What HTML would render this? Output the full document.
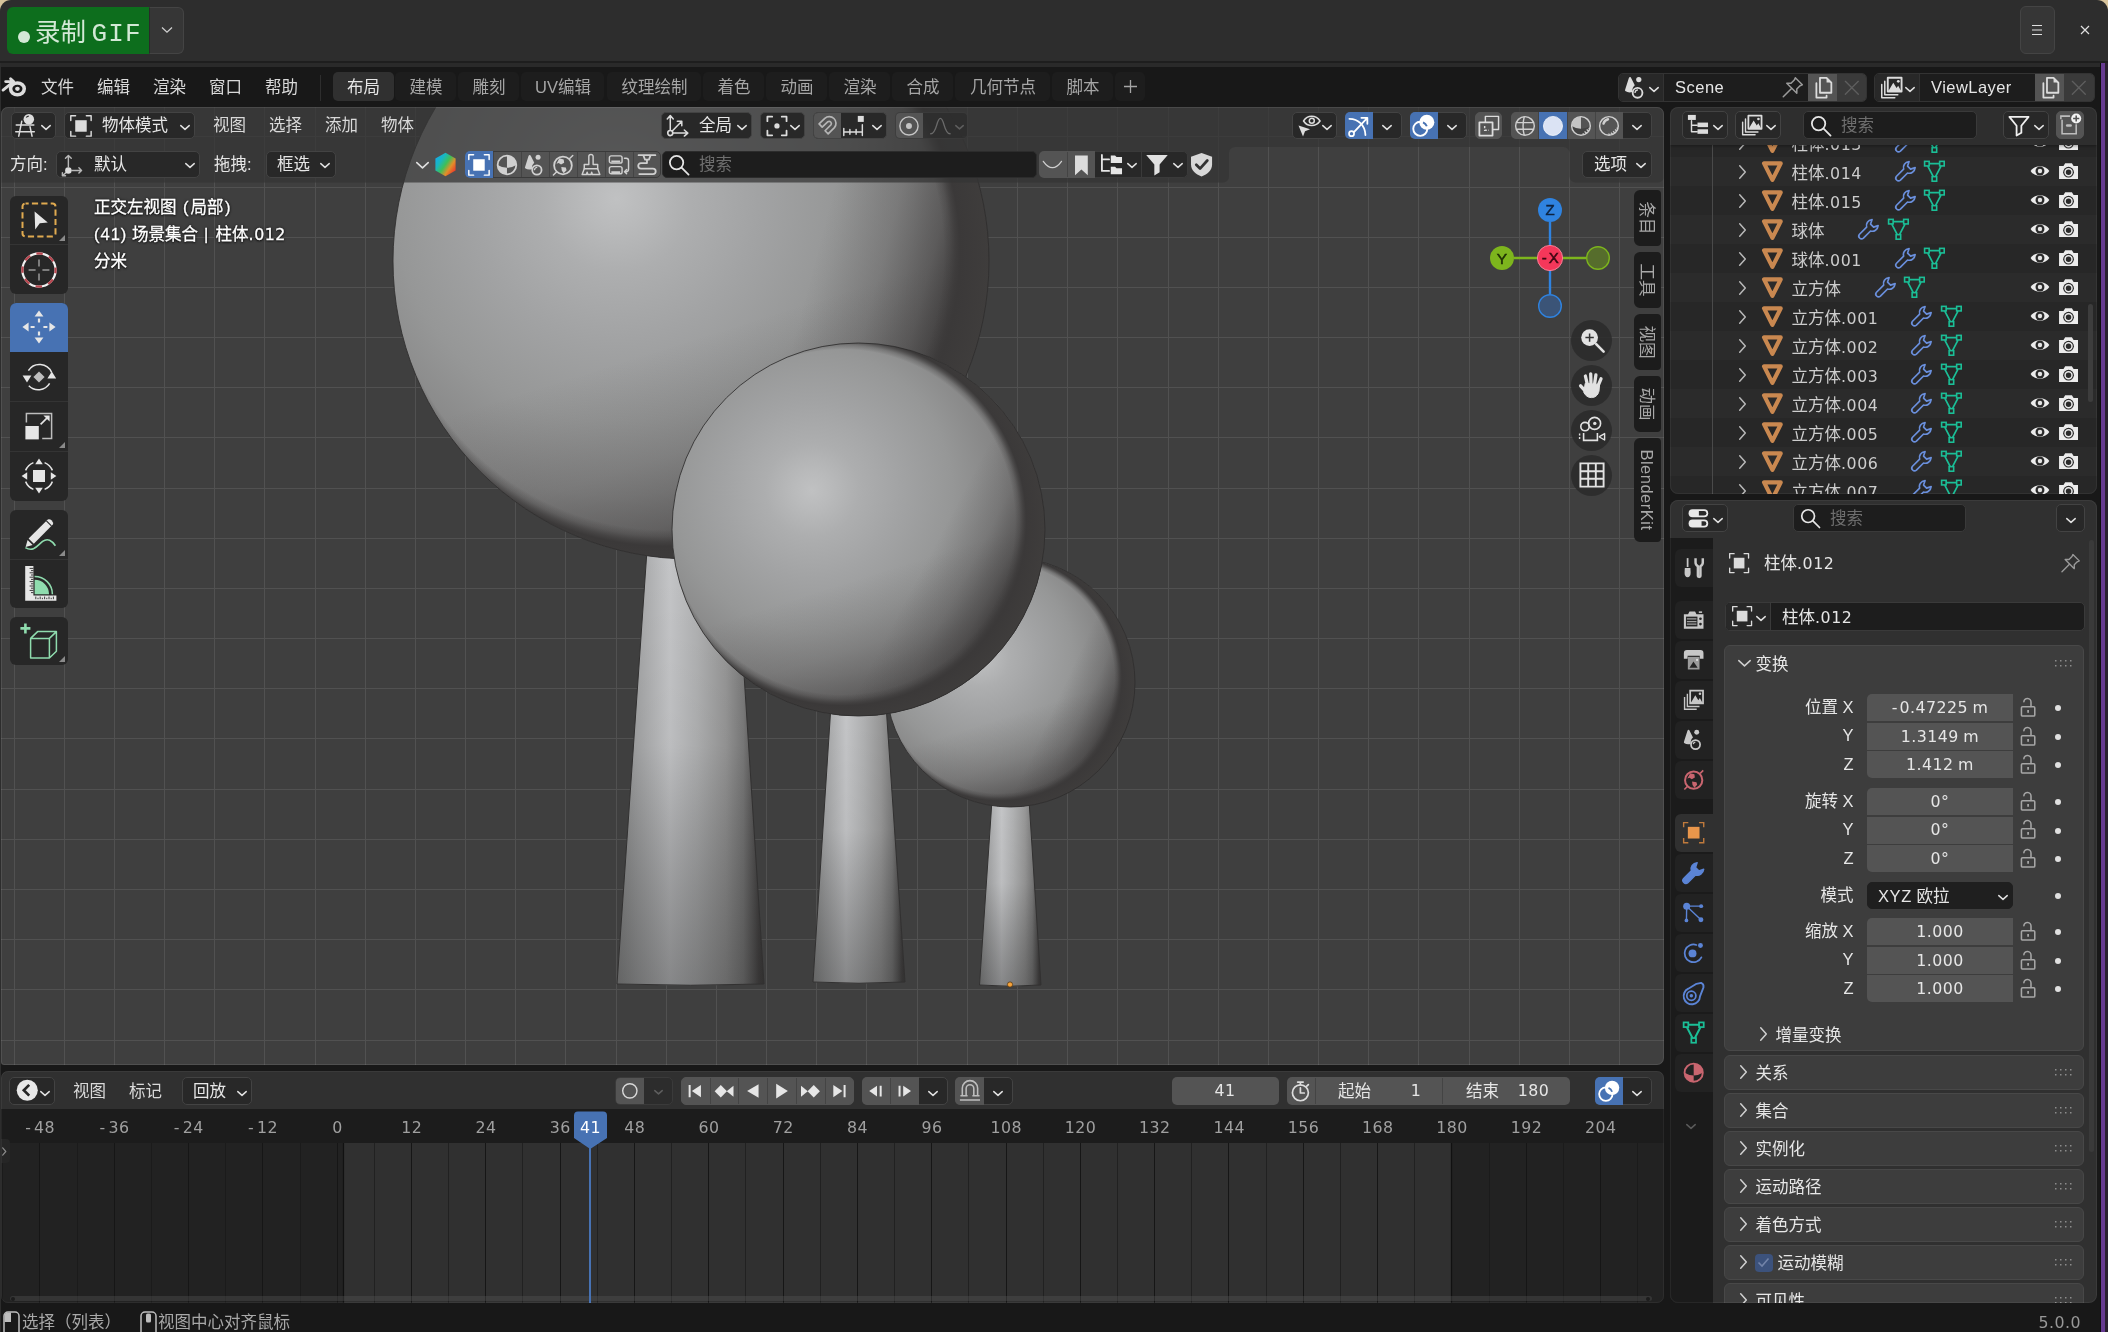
<!DOCTYPE html>
<html lang="zh-CN"><head><meta charset="utf-8"><title>Blender</title>
<style>
html,body{margin:0;padding:0}
body{width:2108px;height:1332px;overflow:hidden;position:relative;background:#2d2d2d;
 font-family:"Liberation Sans","Noto Sans CJK SC",sans-serif;font-size:16.5px;color:#d9d9d9;line-height:24px;
 -webkit-font-smoothing:antialiased}
.a{position:absolute}
.t{position:absolute;white-space:nowrap;line-height:24px;height:24px}
.w{color:#e6e6e6}
.dim{color:#989898}
.n{font-family:'DejaVu Sans',sans-serif;font-size:15.8px;letter-spacing:.55px}
.d{font-family:'DejaVu Sans',sans-serif;font-size:15.8px;letter-spacing:.45px}
.btn{position:absolute;box-sizing:border-box;border-radius:5px;background:#282828;border:1px solid #434343}
.lt{background:#545454;border-color:#545454}
.bl{background:#4772b3;border-color:#4772b3}
svg{position:absolute;overflow:visible}
.ic{fill:none;stroke:#dcdcdc;stroke-width:1.6;stroke-linecap:round;stroke-linejoin:round}
</style></head><body><div id="root" style="position:absolute;left:0;top:0;width:2108px;height:1332px;will-change:transform">

<!-- desktop corners -->
<div class="a" style="left:0;top:0;width:14px;height:14px;background:#d8c49c"></div>
<div class="a" style="left:2094px;top:0;width:14px;height:14px;background:#d8c49c"></div>
<div class="a" style="left:0;top:0;width:2108px;height:62px;background:#2d2d2d;border-radius:11px 11px 0 0"></div>
<div class="a" style="left:0;top:61px;width:2108px;height:2px;background:#1e1e1e"></div>
<div class="a" style="left:1px;top:63px;width:2107px;height:4px;background:#2a2a2a"></div>
<!-- blender window base -->
<div class="a" style="left:1px;top:67px;width:2100px;height:1265px;background:#181818"></div>
<!-- right purple edge -->
<div class="a" style="left:2100px;top:63px;width:1px;height:1269px;background:#0c0c0c"></div>
<div class="a" style="left:2101px;top:63px;width:4px;height:1269px;background:#663a90"></div>
<div class="a" style="left:2105px;top:63px;width:3px;height:1269px;background:#2a2030"></div>

<!-- record button -->
<div class="a" style="left:7px;top:7px;width:143px;height:47px;background:#0d6e1d;border-radius:6px 0 0 6px"></div>
<div class="a" style="left:149px;top:7px;width:35px;height:47px;box-sizing:border-box;background:#363636;border:1px solid #444;border-left:1px solid #2a2a2a;border-radius:0 6px 6px 0"></div>
<div class="a" style="left:18px;top:31px;width:12px;height:12px;border-radius:50%;background:#d3e9d6"></div>
<div class="t" style="left:35px;top:15px;font-size:25.5px;line-height:34px;height:34px;color:#d3e9d6">录制 <span style="font-family:'Liberation Mono',monospace;font-size:26px;letter-spacing:1.1px;margin-left:-1.5px">GIF</span></div>
<svg style="left:160px;top:25px" width="14" height="10" viewBox="0 0 14 10"><path d="M2 2.5 L7 7.2 L12 2.5" fill="none" stroke="#cfcfcf" stroke-width="1.3"/></svg>
<!-- menu / close -->
<div class="a" style="left:2020px;top:6px;width:35px;height:48px;box-sizing:border-box;background:#363636;border:1px solid #444;border-radius:6px"></div>
<svg style="left:2031px;top:24px" width="12" height="12" viewBox="0 0 12 12"><path d="M1 1.5H11M1 6H11M1 10.5H11" stroke="#e0e0e0" stroke-width="1.1"/></svg>
<svg style="left:2080px;top:25px" width="10" height="10" viewBox="0 0 10 10"><path d="M1 1L9 9M9 1L1 9" stroke="#e0e0e0" stroke-width="1.2"/></svg>


<!-- 3D viewport area -->
<div class="a" id="vp" style="left:1px;top:107px;width:1663px;height:958px;background:#3f3f3f;border-radius:7px 7px 7px 3px;overflow:hidden"></div>
<!-- timeline area -->
<div class="a" id="tl" style="left:1px;top:1071px;width:1663px;height:232px;background:#222222;border-radius:7px;overflow:hidden"></div>
<!-- outliner area -->
<div class="a" id="ol" style="left:1670px;top:107px;width:427px;height:387px;background:#282828;border-radius:8px;overflow:hidden"></div>
<!-- properties area -->
<div class="a" id="pr" style="left:1670px;top:500px;width:427px;height:803px;background:#303030;border-radius:8px;overflow:hidden"></div>

<svg class="a" style="left:0;top:0" width="1670" height="1070" viewBox="0 0 1670 1070">
<defs>
<radialGradient id="s1a" gradientUnits="userSpaceOnUse" cx="616.5" cy="198.4" r="372.5">
<stop offset="0" stop-color="#c0c1c2"/><stop offset=".08" stop-color="#b9babb"/><stop offset=".2" stop-color="#adaeaf"/><stop offset=".38" stop-color="#a2a3a4"/>
<stop offset=".6" stop-color="#969797"/><stop offset=".8" stop-color="#868686"/><stop offset=".93" stop-color="#747373"/><stop offset="1" stop-color="#646363"/></radialGradient>
<radialGradient id="s1b" gradientUnits="userSpaceOnUse" cx="666.6" cy="252.7" r="331.4">
<stop offset="0" stop-color="#3b3939" stop-opacity="0"/><stop offset="0.8363" stop-color="#3b3939" stop-opacity="0"/>
<stop offset="0.8561" stop-color="#3b3939" stop-opacity=".3"/><stop offset="0.8719" stop-color="#3b3939" stop-opacity=".72"/><stop offset="0.8858" stop-color="#3b3939" stop-opacity="1"/><stop offset="1" stop-color="#403e3d" stop-opacity="1"/></radialGradient>
<linearGradient id="s1c" gradientUnits="userSpaceOnUse" x1="403.2" y1="183.9" x2="978.8" y2="338.1">
<stop offset="0" stop-color="#3b3939" stop-opacity="0"/><stop offset="0.7000" stop-color="#3b3939" stop-opacity="0"/><stop offset="0.8100" stop-color="#3b3939" stop-opacity=".2"/>
<stop offset="0.8900" stop-color="#3b3939" stop-opacity=".5"/><stop offset="0.9400" stop-color="#3b3939" stop-opacity=".85"/><stop offset="0.9700" stop-color="#3b3939" stop-opacity="1"/><stop offset="1" stop-color="#3b3939" stop-opacity="1"/></linearGradient>
<linearGradient id="s1d" gradientUnits="userSpaceOnUse" x1="601.6" y1="-23.3" x2="780.4" y2="545.3">
<stop offset="0" stop-color="#3b3939" stop-opacity="0"/><stop offset="0.6250" stop-color="#3b3939" stop-opacity="0"/><stop offset="0.8000" stop-color="#3b3939" stop-opacity=".17"/>
<stop offset="0.9100" stop-color="#3b3939" stop-opacity=".36"/><stop offset="0.9750" stop-color="#3b3939" stop-opacity=".6"/><stop offset="1" stop-color="#3b3939" stop-opacity=".75"/></linearGradient>

<radialGradient id="s2a" gradientUnits="userSpaceOnUse" cx="811.9" cy="490.3" r="233.1">
<stop offset="0" stop-color="#c0c1c2"/><stop offset=".08" stop-color="#b9babb"/><stop offset=".2" stop-color="#adaeaf"/><stop offset=".38" stop-color="#a2a3a4"/>
<stop offset=".6" stop-color="#969797"/><stop offset=".8" stop-color="#868686"/><stop offset=".93" stop-color="#747373"/><stop offset="1" stop-color="#646363"/></radialGradient>
<radialGradient id="s2b" gradientUnits="userSpaceOnUse" cx="842.6" cy="522.0" r="207.9">
<stop offset="0" stop-color="#3b3939" stop-opacity="0"/><stop offset="0.8296" stop-color="#3b3939" stop-opacity="0"/>
<stop offset="0.8511" stop-color="#3b3939" stop-opacity=".3"/><stop offset="0.8683" stop-color="#3b3939" stop-opacity=".72"/><stop offset="0.8834" stop-color="#3b3939" stop-opacity="1"/><stop offset="1" stop-color="#403e3d" stop-opacity="1"/></radialGradient>
<linearGradient id="s2c" gradientUnits="userSpaceOnUse" x1="693.8" y1="441.9" x2="1023.2" y2="617.1">
<stop offset="0" stop-color="#3b3939" stop-opacity="0"/><stop offset="0.7000" stop-color="#3b3939" stop-opacity="0"/><stop offset="0.8100" stop-color="#3b3939" stop-opacity=".2"/>
<stop offset="0.8900" stop-color="#3b3939" stop-opacity=".5"/><stop offset="0.9400" stop-color="#3b3939" stop-opacity=".85"/><stop offset="0.9700" stop-color="#3b3939" stop-opacity="1"/><stop offset="1" stop-color="#3b3939" stop-opacity="1"/></linearGradient>
<linearGradient id="s2d" gradientUnits="userSpaceOnUse" x1="802.5" y1="351.6" x2="914.5" y2="707.4">
<stop offset="0" stop-color="#3b3939" stop-opacity="0"/><stop offset="0.6250" stop-color="#3b3939" stop-opacity="0"/><stop offset="0.8000" stop-color="#3b3939" stop-opacity=".17"/>
<stop offset="0.9100" stop-color="#3b3939" stop-opacity=".36"/><stop offset="0.9750" stop-color="#3b3939" stop-opacity=".6"/><stop offset="1" stop-color="#3b3939" stop-opacity=".75"/></linearGradient>

<radialGradient id="s3a" gradientUnits="userSpaceOnUse" cx="979.4" cy="656.4" r="155.6">
<stop offset="0" stop-color="#c0c1c2"/><stop offset=".08" stop-color="#b9babb"/><stop offset=".2" stop-color="#adaeaf"/><stop offset=".38" stop-color="#a2a3a4"/>
<stop offset=".6" stop-color="#969797"/><stop offset=".8" stop-color="#868686"/><stop offset=".93" stop-color="#747373"/><stop offset="1" stop-color="#646363"/></radialGradient>
<radialGradient id="s3b" gradientUnits="userSpaceOnUse" cx="999.3" cy="678.1" r="139.4">
<stop offset="0" stop-color="#3b3939" stop-opacity="0"/><stop offset="0.8259" stop-color="#3b3939" stop-opacity="0"/>
<stop offset="0.8473" stop-color="#3b3939" stop-opacity=".3"/><stop offset="0.8645" stop-color="#3b3939" stop-opacity=".72"/><stop offset="0.8795" stop-color="#3b3939" stop-opacity="1"/><stop offset="1" stop-color="#403e3d" stop-opacity="1"/></radialGradient>
<linearGradient id="s3c" gradientUnits="userSpaceOnUse" x1="897.7" y1="629.9" x2="1123.3" y2="735.1">
<stop offset="0" stop-color="#3b3939" stop-opacity="0"/><stop offset="0.7000" stop-color="#3b3939" stop-opacity="0"/><stop offset="0.8100" stop-color="#3b3939" stop-opacity=".2"/>
<stop offset="0.8900" stop-color="#3b3939" stop-opacity=".5"/><stop offset="0.9400" stop-color="#3b3939" stop-opacity=".85"/><stop offset="0.9700" stop-color="#3b3939" stop-opacity="1"/><stop offset="1" stop-color="#3b3939" stop-opacity="1"/></linearGradient>
<linearGradient id="s3d" gradientUnits="userSpaceOnUse" x1="973.1" y1="563.7" x2="1047.8" y2="801.3">
<stop offset="0" stop-color="#3b3939" stop-opacity="0"/><stop offset="0.6250" stop-color="#3b3939" stop-opacity="0"/><stop offset="0.8000" stop-color="#3b3939" stop-opacity=".17"/>
<stop offset="0.9100" stop-color="#3b3939" stop-opacity=".36"/><stop offset="0.9750" stop-color="#3b3939" stop-opacity=".6"/><stop offset="1" stop-color="#3b3939" stop-opacity=".75"/></linearGradient>
<linearGradient id="c1h" gradientUnits="userSpaceOnUse" x1="617" y1="0" x2="764" y2="0">
<stop offset="0" stop-color="#8d8e8e"/><stop offset=".14" stop-color="#a4a5a6"/><stop offset=".36" stop-color="#c4c5c7"/><stop offset=".55" stop-color="#b0b1b2"/>
<stop offset=".74" stop-color="#979797"/><stop offset=".86" stop-color="#7b7b7b"/><stop offset=".925" stop-color="#5c5b5b"/><stop offset=".965" stop-color="#474545"/><stop offset="1" stop-color="#403e3d"/></linearGradient>
<linearGradient id="c1v" gradientUnits="userSpaceOnUse" x1="0" y1="550" x2="0" y2="984">
<stop offset="0" stop-color="#000" stop-opacity="0"/><stop offset=".45" stop-color="#000" stop-opacity=".04"/><stop offset="1" stop-color="#1a1a1a" stop-opacity=".36"/></linearGradient><linearGradient id="c2h" gradientUnits="userSpaceOnUse" x1="813" y1="0" x2="905" y2="0">
<stop offset="0" stop-color="#8d8e8e"/><stop offset=".14" stop-color="#a4a5a6"/><stop offset=".36" stop-color="#c4c5c7"/><stop offset=".55" stop-color="#b0b1b2"/>
<stop offset=".74" stop-color="#979797"/><stop offset=".86" stop-color="#7b7b7b"/><stop offset=".925" stop-color="#5c5b5b"/><stop offset=".965" stop-color="#474545"/><stop offset="1" stop-color="#403e3d"/></linearGradient>
<linearGradient id="c2v" gradientUnits="userSpaceOnUse" x1="0" y1="705" x2="0" y2="982">
<stop offset="0" stop-color="#000" stop-opacity="0"/><stop offset=".45" stop-color="#000" stop-opacity=".04"/><stop offset="1" stop-color="#1a1a1a" stop-opacity=".36"/></linearGradient><linearGradient id="c3h" gradientUnits="userSpaceOnUse" x1="979.5" y1="0" x2="1041" y2="0">
<stop offset="0" stop-color="#8d8e8e"/><stop offset=".14" stop-color="#a4a5a6"/><stop offset=".36" stop-color="#c4c5c7"/><stop offset=".55" stop-color="#b0b1b2"/>
<stop offset=".74" stop-color="#979797"/><stop offset=".86" stop-color="#7b7b7b"/><stop offset=".925" stop-color="#5c5b5b"/><stop offset=".965" stop-color="#474545"/><stop offset="1" stop-color="#403e3d"/></linearGradient>
<linearGradient id="c3v" gradientUnits="userSpaceOnUse" x1="0" y1="800" x2="0" y2="985">
<stop offset="0" stop-color="#000" stop-opacity="0"/><stop offset=".45" stop-color="#000" stop-opacity=".04"/><stop offset="1" stop-color="#1a1a1a" stop-opacity=".36"/></linearGradient><clipPath id="vpc"><rect x="1" y="107" width="1663" height="958" rx="7"/></clipPath></defs>
<g clip-path="url(#vpc)">
<path d="M14.5 107V1066M64.5 107V1066M114.5 107V1066M164.5 107V1066M214.5 107V1066M264.5 107V1066M315.5 107V1066M365.5 107V1066M415.5 107V1066M465.5 107V1066M515.5 107V1066M565.5 107V1066M616.5 107V1066M666.5 107V1066M716.5 107V1066M766.5 107V1066M816.5 107V1066M866.5 107V1066M917.5 107V1066M967.5 107V1066M1017.5 107V1066M1067.5 107V1066M1117.5 107V1066M1168.5 107V1066M1218.5 107V1066M1268.5 107V1066M1318.5 107V1066M1368.5 107V1066M1418.5 107V1066M1469.5 107V1066M1519.5 107V1066M1569.5 107V1066M1619.5 107V1066M1669.5 107V1066M0 136.5H1666M0 187.5H1666M0 237.5H1666M0 287.5H1666M0 337.5H1666M0 387.5H1666M0 437.5H1666M0 488.5H1666M0 538.5H1666M0 588.5H1666M0 638.5H1666M0 688.5H1666M0 738.5H1666M0 789.5H1666M0 839.5H1666M0 889.5H1666M0 939.5H1666M0 989.5H1666M0 1040.5H1666" stroke="#515151" stroke-width="1" fill="none"/>
<path d="M647 550L736 550L764 984Q690.5 986.5 617 984Z" fill="url(#c1h)"/><path d="M647 550L736 550L764 984Q690.5 986.5 617 984Z" fill="url(#c1v)" stroke="#323131" stroke-width="1"/>
<circle cx="691" cy="261" r="298" fill="url(#s1a)"/><circle cx="691" cy="261" r="298" fill="url(#s1d)"/><circle cx="691" cy="261" r="298" fill="url(#s1c)"/><circle cx="691" cy="261" r="298" fill="url(#s1b)" stroke="#2e2d2d" stroke-opacity=".85" stroke-width="1"/>
<path d="M992 800L1029 800L1041 985Q1010.25 987.5 979.5 985Z" fill="url(#c3h)"/><path d="M992 800L1029 800L1041 985Q1010.25 987.5 979.5 985Z" fill="url(#c3v)" stroke="#323131" stroke-width="1"/>
<circle cx="1010.5" cy="682.5" r="124.5" fill="url(#s3a)"/><circle cx="1010.5" cy="682.5" r="124.5" fill="url(#s3d)"/><circle cx="1010.5" cy="682.5" r="124.5" fill="url(#s3c)"/><circle cx="1010.5" cy="682.5" r="124.5" fill="url(#s3b)" stroke="#2e2d2d" stroke-opacity=".85" stroke-width="1"/>
<path d="M831 705L886 705L905 982Q859.0 984.5 813 982Z" fill="url(#c2h)"/><path d="M831 705L886 705L905 982Q859.0 984.5 813 982Z" fill="url(#c2v)" stroke="#323131" stroke-width="1"/>
<circle cx="858.5" cy="529.5" r="186.5" fill="url(#s2a)"/><circle cx="858.5" cy="529.5" r="186.5" fill="url(#s2d)"/><circle cx="858.5" cy="529.5" r="186.5" fill="url(#s2c)"/><circle cx="858.5" cy="529.5" r="186.5" fill="url(#s2b)" stroke="#2e2d2d" stroke-opacity=".85" stroke-width="1"/>
<circle cx="1010" cy="984.5" r="2.6" fill="#f5a23a" stroke="#5a3a10" stroke-width=".8"/>
</g></svg>

<svg class="a" style="left:0;top:0" width="1670" height="190" viewBox="0 0 1670 190">
<path d="M1 114 a7 7 0 0 1 7 -7 H1657 a7 7 0 0 1 7 7 V176.5 a6 6 0 0 1 -6 6 H1575.5 a6 6 0 0 1 -6 -6 V153 a6 6 0 0 0 -6 -6 H1235 a6 6 0 0 0 -6 6 V176.5 a6 6 0 0 1 -6 6 H1 Z" fill="rgb(52,52,52)" fill-opacity=".74"/>
</svg>
<svg style="left:1.3200000000000003px;top:73.32px;" width="27.36" height="27.36" viewBox="0 0 20 20"><path d="M1.5 12.5L9.2 6.3H3.4M9.2 6.3L7 4.2" fill="none" stroke="#dcdcdc" stroke-width="2.1" stroke-linecap="round" stroke-linejoin="round"/><ellipse cx="12" cy="11.6" rx="5" ry="4.3" fill="none" stroke="#dcdcdc" stroke-width="2.6"/><ellipse cx="12" cy="11.6" rx="1.7" ry="1.5" fill="#dcdcdc"/></svg>
<div class="t " style="left:41px;top:75px;">文件</div>
<div class="t " style="left:97px;top:75px;">编辑</div>
<div class="t " style="left:153px;top:75px;">渲染</div>
<div class="t " style="left:209px;top:75px;">窗口</div>
<div class="t " style="left:265px;top:75px;">帮助</div>
<div class="a" style="left:320px;top:75px;width:1px;height:26px;background:#2e2e2e;"></div>
<div class="a" style="left:333px;top:72px;width:61px;height:29px;background:#303030;border-radius:5px"></div>
<div class="t w" style="left:333.0px;width:61px;text-align:center;top:75px;">布局</div>
<div class="a" style="left:395px;top:72px;width:61px;height:29px;background:#1d1d1d;border-radius:5px"></div>
<div class="t " style="left:395.0px;width:62px;text-align:center;top:75px;color:#a6a6a6">建模</div>
<div class="a" style="left:458px;top:72px;width:61px;height:29px;background:#1d1d1d;border-radius:5px"></div>
<div class="t " style="left:458.0px;width:62px;text-align:center;top:75px;color:#a6a6a6">雕刻</div>
<div class="a" style="left:521px;top:72px;width:83px;height:29px;background:#1d1d1d;border-radius:5px"></div>
<div class="t " style="left:521.0px;width:84px;text-align:center;top:75px;color:#a6a6a6">UV编辑</div>
<div class="a" style="left:607px;top:72px;width:94px;height:29px;background:#1d1d1d;border-radius:5px"></div>
<div class="t " style="left:607.0px;width:95px;text-align:center;top:75px;color:#a6a6a6">纹理绘制</div>
<div class="a" style="left:703px;top:72px;width:61px;height:29px;background:#1d1d1d;border-radius:5px"></div>
<div class="t " style="left:703.0px;width:62px;text-align:center;top:75px;color:#a6a6a6">着色</div>
<div class="a" style="left:766px;top:72px;width:61px;height:29px;background:#1d1d1d;border-radius:5px"></div>
<div class="t " style="left:766.0px;width:62px;text-align:center;top:75px;color:#a6a6a6">动画</div>
<div class="a" style="left:829px;top:72px;width:61px;height:29px;background:#1d1d1d;border-radius:5px"></div>
<div class="t " style="left:829.0px;width:62px;text-align:center;top:75px;color:#a6a6a6">渲染</div>
<div class="a" style="left:892px;top:72px;width:61px;height:29px;background:#1d1d1d;border-radius:5px"></div>
<div class="t " style="left:892.0px;width:62px;text-align:center;top:75px;color:#a6a6a6">合成</div>
<div class="a" style="left:955px;top:72px;width:95px;height:29px;background:#1d1d1d;border-radius:5px"></div>
<div class="t " style="left:955.0px;width:96px;text-align:center;top:75px;color:#a6a6a6">几何节点</div>
<div class="a" style="left:1052px;top:72px;width:61px;height:29px;background:#1d1d1d;border-radius:5px"></div>
<div class="t " style="left:1052.0px;width:62px;text-align:center;top:75px;color:#a6a6a6">脚本</div>
<div class="a" style="left:1115px;top:72px;width:30px;height:29px;background:#1d1d1d;border-radius:5px"></div>
<svg style="left:1123px;top:79px" width="15" height="15" viewBox="0 0 15 15"><path d="M7.5 1V14M1 7.5H14" stroke="#a6a6a6" stroke-width="1.3"/></svg>
<div class="btn " style="left:1618px;top:73px;width:249px;height:29px;background:#1d1d1d;border-color:#333"></div>
<div class="a" style="left:1619px;top:74px;width:44px;height:27px;background:#282828;border-radius:4px 0 0 4px"></div>
<div class="a" style="left:1663px;top:74px;width:1px;height:27px;background:#333;"></div>
<svg style="left:1623.46px;top:74.96000000000001px;" width="25.08" height="25.08" viewBox="0 0 20 20"><path d="M5.6 1.6Q6.2 1.6 6.6 2.6L9.4 8.2Q7 10.4 7.6 13.4Q4.6 14.6 1.8 12.8Q1.4 12.2 1.8 11.4L4.6 2.6Q5 1.6 5.6 1.6Z" fill="#dcdcdc"/><circle cx="12.6" cy="3.6" r="2.1" fill="#dcdcdc"/><circle cx="11.6" cy="14.2" r="3.9" fill="none" stroke="#dcdcdc" stroke-width="1.5" stroke-linecap="round" stroke-linejoin="round"/><path d="M9.6 13.8A2.2 2.2 0 0 1 11.4 12" fill="none" stroke="#dcdcdc" stroke-width="1.2" stroke-linecap="round" stroke-linejoin="round"/></svg>
<svg style="left:1649.0px;top:86.5px" width="10" height="5.0" viewBox="0 0 10 5.0"><path d="M0.8 0.6L5.0 4.4L9.2 0.6" fill="none" stroke="#e0e0e0" stroke-width="1.5" stroke-linecap="round" stroke-linejoin="round"/></svg>
<div class="t w" style="left:1675px;top:75px;letter-spacing:.5px">Scene</div>
<svg style="left:1780.46px;top:75.46000000000001px;" width="25.08" height="25.08" viewBox="0 0 20 20"><path d="M12.2 2.2L17.8 7.8L16 8.6L13.4 11.2L13.4 14.6L5.4 6.6L8.8 6.6L11.4 4Z" fill="none" stroke="#9a9a9a" stroke-width="1.2" stroke-linecap="round" stroke-linejoin="round"/><path d="M9.2 10.8L2.6 17.4" fill="none" stroke="#9a9a9a" stroke-width="1.2" stroke-linecap="round" stroke-linejoin="round"/></svg>
<div class="a" style="left:1808px;top:74px;width:29px;height:27px;background:#545454;"></div>
<svg style="left:1810.53px;top:75.53px;" width="23.939999999999998" height="23.939999999999998" viewBox="0 0 20 20"><path d="M7.5 1.5H13L17 5.5V14H7.5Z" fill="none" stroke="#dcdcdc" stroke-width="1.5" stroke-linecap="round" stroke-linejoin="round"/><path d="M13 1.5V5.5H17Z" fill="#dcdcdc"/><path d="M4.5 6V18H13V16.5" fill="none" stroke="#dcdcdc" stroke-width="1.5" stroke-linecap="round" stroke-linejoin="round"/></svg>
<div class="a" style="left:1837px;top:74px;width:29px;height:27px;background:#3a3a3a;border-radius:0 4px 4px 0"></div>
<svg style="left:1841.17px;top:76.67px;" width="21.659999999999997" height="21.659999999999997" viewBox="0 0 20 20"><path d="M4 4L16 16M16 4L4 16" fill="none" stroke="#5e5e5e" stroke-width="1.2" stroke-linecap="round" stroke-linejoin="round"/></svg>
<div class="btn " style="left:1874px;top:73px;width:221px;height:29px;background:#1d1d1d;border-color:#333"></div>
<div class="a" style="left:1875px;top:74px;width:44px;height:27px;background:#282828;border-radius:4px 0 0 4px"></div>
<div class="a" style="left:1919px;top:74px;width:1px;height:27px;background:#333;"></div>
<svg style="left:1879.46px;top:74.96000000000001px;" width="25.08" height="25.08" viewBox="0 0 20 20"><path d="M7 2.2H18V13.2H7Z" fill="none" stroke="#dcdcdc" stroke-width="1.5" stroke-linecap="round" stroke-linejoin="round"/><path d="M7.5 12.8L11.4 6.2L14 10.4L15.3 8.6L17.6 12.8Z" fill="#dcdcdc"/><circle cx="15.4" cy="5" r="1.1" fill="#dcdcdc"/><path d="M4.6 5V15.8H15M2.2 7.6V18.2H12.6" fill="none" stroke="#dcdcdc" stroke-width="1.2" stroke-linecap="round" stroke-linejoin="round"/></svg>
<svg style="left:1905.0px;top:86.5px" width="10" height="5.0" viewBox="0 0 10 5.0"><path d="M0.8 0.6L5.0 4.4L9.2 0.6" fill="none" stroke="#e0e0e0" stroke-width="1.5" stroke-linecap="round" stroke-linejoin="round"/></svg>
<div class="t w" style="left:1931px;top:75px;letter-spacing:.45px">ViewLayer</div>
<div class="a" style="left:2035px;top:74px;width:29px;height:27px;background:#545454;"></div>
<svg style="left:2037.53px;top:75.53px;" width="23.939999999999998" height="23.939999999999998" viewBox="0 0 20 20"><path d="M7.5 1.5H13L17 5.5V14H7.5Z" fill="none" stroke="#dcdcdc" stroke-width="1.5" stroke-linecap="round" stroke-linejoin="round"/><path d="M13 1.5V5.5H17Z" fill="#dcdcdc"/><path d="M4.5 6V18H13V16.5" fill="none" stroke="#dcdcdc" stroke-width="1.5" stroke-linecap="round" stroke-linejoin="round"/></svg>
<div class="a" style="left:2064px;top:74px;width:30px;height:27px;background:#3a3a3a;border-radius:0 4px 4px 0"></div>
<svg style="left:2068.17px;top:76.67px;" width="21.659999999999997" height="21.659999999999997" viewBox="0 0 20 20"><path d="M4 4L16 16M16 4L4 16" fill="none" stroke="#5e5e5e" stroke-width="1.2" stroke-linecap="round" stroke-linejoin="round"/></svg>
<div class="btn " style="left:11px;top:112px;width:45px;height:27px;"></div>
<svg style="left:15.46px;top:113.46000000000001px;" width="25.08" height="25.08" viewBox="0 0 20 20"><path d="M1 9.5H15M0.6 15H15.4M5.4 6.5L3 18.5M12 11L13.6 18.5" fill="none" stroke="#dcdcdc" stroke-width="1.2" stroke-linecap="round" stroke-linejoin="round"/><circle cx="11" cy="5" r="4.2" fill="#dcdcdc"/><path d="M9 3.6A2.6 2.6 0 0 1 11 2.4" fill="none" stroke="#2a2a2a" stroke-width="1"/></svg>
<svg style="left:41.0px;top:124.5px" width="10" height="5.0" viewBox="0 0 10 5.0"><path d="M0.8 0.6L5.0 4.4L9.2 0.6" fill="none" stroke="#e0e0e0" stroke-width="1.5" stroke-linecap="round" stroke-linejoin="round"/></svg>
<div class="btn " style="left:64px;top:112px;width:131px;height:27px;"></div>
<svg style="left:69.03px;top:114.03px;" width="23.939999999999998" height="23.939999999999998" viewBox="0 0 20 20"><rect x="5.2" y="5.2" width="9.6" height="9.6" fill="#dcdcdc"/><path d="M1.5 5.5V1.5H5.5M14.5 1.5H18.5V5.5M18.5 14.5V18.5H14.5M5.5 18.5H1.5V14.5" fill="none" stroke="#dcdcdc" stroke-width="1.2" stroke-linecap="round" stroke-linejoin="round"/></svg>
<div class="t w" style="left:102px;top:113px;">物体模式</div>
<svg style="left:180.0px;top:124.5px" width="10" height="5.0" viewBox="0 0 10 5.0"><path d="M0.8 0.6L5.0 4.4L9.2 0.6" fill="none" stroke="#e0e0e0" stroke-width="1.5" stroke-linecap="round" stroke-linejoin="round"/></svg>
<div class="t " style="left:213px;top:113px;">视图</div>
<div class="t " style="left:269px;top:113px;">选择</div>
<div class="t " style="left:325px;top:113px;">添加</div>
<div class="t " style="left:381px;top:113px;">物体</div>
<div class="btn " style="left:661px;top:112px;width:91px;height:27px;"></div>
<svg style="left:665.46px;top:113.46000000000001px;" width="25.08" height="25.08" viewBox="0 0 20 20"><path d="M4.2 16V2.2M1.8 4.8L4.2 2L6.6 4.8M6.2 16H18M15.4 13.6L18.2 16L15.4 18.4M5.6 14.6L13 7M13.4 10.2V6.6H9.8" fill="none" stroke="#dcdcdc" stroke-width="1.2" stroke-linecap="round" stroke-linejoin="round"/><circle cx="4.2" cy="16" r="2" fill="#282828" stroke="#dcdcdc" stroke-width="1.3"/></svg>
<div class="t w" style="left:699px;top:113px;">全局</div>
<svg style="left:737.0px;top:124.5px" width="10" height="5.0" viewBox="0 0 10 5.0"><path d="M0.8 0.6L5.0 4.4L9.2 0.6" fill="none" stroke="#e0e0e0" stroke-width="1.5" stroke-linecap="round" stroke-linejoin="round"/></svg>
<div class="btn " style="left:760px;top:112px;width:45px;height:27px;"></div>
<svg style="left:765.03px;top:114.03px;" width="23.939999999999998" height="23.939999999999998" viewBox="0 0 20 20"><circle cx="10" cy="10" r="2.2" fill="#dcdcdc"/><path d="M2 6V2.2H6M14 2.2H18V6M18 14V17.8H14M6 17.8H2V14" fill="none" stroke="#dcdcdc" stroke-width="1.5" stroke-linecap="round" stroke-linejoin="round"/></svg>
<svg style="left:790.0px;top:124.5px" width="10" height="5.0" viewBox="0 0 10 5.0"><path d="M0.8 0.6L5.0 4.4L9.2 0.6" fill="none" stroke="#e0e0e0" stroke-width="1.5" stroke-linecap="round" stroke-linejoin="round"/></svg>
<div class="btn " style="left:813px;top:112px;width:74px;height:27px;"></div>
<div class="a" style="left:814px;top:113px;width:27px;height:25px;background:#545454;border-radius:4px 0 0 4px"></div>
<svg style="left:815.03px;top:114.03px;" width="23.939999999999998" height="23.939999999999998" viewBox="0 0 20 20"><path d="M3.4 8.2L8.2 3.6A5.6 5.6 0 0 1 16.2 11.4L11 16.6L8.4 14L13.4 9A1.9 1.9 0 0 0 10.8 6.4L6 11Z" fill="none" stroke="#b5b5b5" stroke-width="1.4" stroke-linejoin="round"/></svg>
<svg style="left:842.03px;top:114.03px;" width="23.939999999999998" height="23.939999999999998" viewBox="0 0 20 20"><path d="M1.5 12V18M1.5 15H17M17 9V18M6.6 13V17M11.8 13V17" fill="none" stroke="#dcdcdc" stroke-width="1.2" stroke-linecap="round" stroke-linejoin="round"/><rect x="13.2" y="1.6" width="5" height="5" fill="#dcdcdc"/></svg>
<svg style="left:872.0px;top:124.5px" width="10" height="5.0" viewBox="0 0 10 5.0"><path d="M0.8 0.6L5.0 4.4L9.2 0.6" fill="none" stroke="#e0e0e0" stroke-width="1.5" stroke-linecap="round" stroke-linejoin="round"/></svg>
<div class="btn " style="left:895px;top:112px;width:73px;height:27px;background:rgba(40,40,40,.55);border-color:rgba(70,70,70,.5)"></div>
<div class="a" style="left:896px;top:113px;width:27px;height:25px;background:#545454;border-radius:4px 0 0 4px"></div>
<svg style="left:897.03px;top:114.03px;" width="23.939999999999998" height="23.939999999999998" viewBox="0 0 20 20"><circle cx="10" cy="10" r="7.6" fill="none" stroke="#c4c4c4" stroke-width="1.2" stroke-linecap="round" stroke-linejoin="round"/><circle cx="10" cy="10" r="2.5" fill="#c4c4c4"/></svg>
<svg style="left:928.6px;top:114.6px;" width="22.799999999999997" height="22.799999999999997" viewBox="0 0 20 20"><path d="M1.5 16.5C7 16.5 6.5 3 10 3S13 16.5 18.5 16.5" fill="none" stroke="#6a6a6a" stroke-width="1.2" stroke-linecap="round" stroke-linejoin="round"/></svg>
<svg style="left:954.5px;top:124.75px" width="9" height="4.5" viewBox="0 0 9 4.5"><path d="M0.8 0.6L4.5 3.9L8.2 0.6" fill="none" stroke="#5e5e5e" stroke-width="1.5" stroke-linecap="round" stroke-linejoin="round"/></svg>
<div class="btn " style="left:1292px;top:112px;width:45px;height:27px;"></div>
<svg style="left:1297.46px;top:113.46000000000001px;" width="25.08" height="25.08" viewBox="0 0 20 20"><path d="M5.2 6.4C8.4 1.4 15 1.4 18.4 6.4C15 11.2 8.4 11.2 5.2 6.4Z" fill="none" stroke="#dcdcdc" stroke-width="1.2" stroke-linecap="round" stroke-linejoin="round"/><circle cx="11.8" cy="6.2" r="2" fill="none" stroke="#dcdcdc" stroke-width="1.2" stroke-linecap="round" stroke-linejoin="round"/><path d="M1.2 10L10.4 13L6.4 14.6L4.8 18.8Z" fill="#dcdcdc"/></svg>
<svg style="left:1322.0px;top:124.5px" width="10" height="5.0" viewBox="0 0 10 5.0"><path d="M0.8 0.6L5.0 4.4L9.2 0.6" fill="none" stroke="#e0e0e0" stroke-width="1.5" stroke-linecap="round" stroke-linejoin="round"/></svg>
<div class="btn " style="left:1345px;top:112px;width:57px;height:27px;"></div>
<div class="a" style="left:1345px;top:112px;width:28px;height:27px;background:#4772b3;border-radius:5px 0 0 5px"></div>
<svg style="left:1347.03px;top:114.03px;" width="23.939999999999998" height="23.939999999999998" viewBox="0 0 20 20"><path d="M2 4C9.6 4 15.2 9.6 15.4 17.6" fill="none" stroke="#ffffff" stroke-width="1.5" stroke-linecap="round" stroke-linejoin="round"/><path d="M5 16L16.6 3.6M12 3.2H17V8.2" fill="none" stroke="#ffffff" stroke-width="1.5" stroke-linecap="round" stroke-linejoin="round"/><circle cx="3.8" cy="16.4" r="2.1" fill="#4772b3" stroke="#ffffff" stroke-width="1.4"/></svg>
<svg style="left:1382.0px;top:124.5px" width="10" height="5.0" viewBox="0 0 10 5.0"><path d="M0.8 0.6L5.0 4.4L9.2 0.6" fill="none" stroke="#e0e0e0" stroke-width="1.5" stroke-linecap="round" stroke-linejoin="round"/></svg>
<div class="btn " style="left:1410px;top:112px;width:57px;height:27px;"></div>
<div class="a" style="left:1410px;top:112px;width:28px;height:27px;background:#4772b3;border-radius:5px 0 0 5px"></div>
<svg style="left:1410.96px;top:113.46000000000001px;" width="25.08" height="25.08" viewBox="0 0 20 20"><circle cx="12.6" cy="7.4" r="6" fill="#ffffff"/><circle cx="7.4" cy="12.6" r="5.6" fill="none" stroke="#ffffff" stroke-width="1.5"/><path d="M9.6 7.4A5.6 5.6 0 0 1 12.6 10.6" fill="none" stroke="#4772b3" stroke-width="1.5"/></svg>
<svg style="left:1447.0px;top:124.5px" width="10" height="5.0" viewBox="0 0 10 5.0"><path d="M0.8 0.6L5.0 4.4L9.2 0.6" fill="none" stroke="#e0e0e0" stroke-width="1.5" stroke-linecap="round" stroke-linejoin="round"/></svg>
<div class="btn lt" style="left:1475px;top:112px;width:27px;height:27px;"></div>
<svg style="left:1476.53px;top:114.03px;" width="23.939999999999998" height="23.939999999999998" viewBox="0 0 20 20"><rect x="2" y="7" width="11" height="11" fill="none" stroke="#dcdcdc" stroke-width="1.5" stroke-linecap="round" stroke-linejoin="round"/><path d="M7 6.6V2H18V13H13.6" fill="none" stroke="#dcdcdc" stroke-width="1.2" stroke-linecap="round" stroke-linejoin="round"/><path d="M6.4 10V13.6H10" fill="none" stroke="#dcdcdc" stroke-width="1.2" stroke-dasharray="2 1.4"/></svg>
<div class="btn " style="left:1511px;top:112px;width:141px;height:27px;"></div>
<div class="a" style="left:1511px;top:112px;width:112px;height:27px;background:#545454;border-radius:5px 0 0 5px"></div>
<div class="a" style="left:1538.5px;top:112px;width:28px;height:27px;background:#4772b3;"></div>
<div class="a" style="left:1538px;top:112px;width:1px;height:27px;background:#444;"></div>
<div class="a" style="left:1566.5px;top:112px;width:1px;height:27px;background:#444;"></div>
<div class="a" style="left:1594.5px;top:112px;width:1px;height:27px;background:#444;"></div>
<svg style="left:1512.53px;top:114.03px;" width="23.939999999999998" height="23.939999999999998" viewBox="0 0 20 20"><circle cx="10" cy="10" r="7.8" fill="none" stroke="#cfcfcf" stroke-width="1.2"/><path d="M9.4 2.2Q7.4 10 9.4 17.8M2.8 7.2H17.2M2.8 12.8H17.2" fill="none" stroke="#cfcfcf" stroke-width="1.2"/></svg>
<svg style="left:1540.53px;top:114.03px;" width="23.939999999999998" height="23.939999999999998" viewBox="0 0 20 20"><circle cx="10" cy="10" r="8" fill="#dbe3f4" stroke="#fff" stroke-width="0.6"/></svg>
<svg style="left:1568.53px;top:114.03px;" width="23.939999999999998" height="23.939999999999998" viewBox="0 0 20 20"><path d="M2.2 10Q10 14.8 17.8 10A7.8 7.8 0 0 1 2.2 10Z" fill="#000" fill-opacity=".2"/><circle cx="10" cy="10" r="7.8" fill="none" stroke="#cfcfcf" stroke-width="1.2"/><path d="M10 2.2A7.8 7.8 0 0 0 2.2 10Q6.1 12.4 10 12.4Z" fill="#c4c4c4"/><path d="M11.4 16.2L12.8 17.4M13 14.6L15 16.2M14.8 13L16.8 14.6M16.4 11.6L17.6 12.6" stroke="#cfcfcf" stroke-width="1.1" fill="none"/></svg>
<svg style="left:1596.53px;top:114.03px;" width="23.939999999999998" height="23.939999999999998" viewBox="0 0 20 20"><circle cx="10" cy="10" r="7.8" fill="none" stroke="#cfcfcf" stroke-width="1.2"/><path d="M5.4 8A5.4 5.4 0 0 1 9.2 4.4" fill="none" stroke="#cfcfcf" stroke-width="2" stroke-linecap="round"/><path d="M9.6 16.4L10.6 17.4M11.6 15.6L13.2 17M13.4 14.4L15.2 16M15 13L16.8 14.4M16.4 11.4L17.6 12.4" stroke="#cfcfcf" stroke-width="1.1" fill="none"/></svg>
<svg style="left:1632.0px;top:124.5px" width="10" height="5.0" viewBox="0 0 10 5.0"><path d="M0.8 0.6L5.0 4.4L9.2 0.6" fill="none" stroke="#e0e0e0" stroke-width="1.5" stroke-linecap="round" stroke-linejoin="round"/></svg>
<div class="t w" style="left:10px;top:152px;">方向:</div>
<div class="btn " style="left:56px;top:150.5px;width:144px;height:27.5px;"></div>
<svg style="left:60.03px;top:152.83px;" width="23.939999999999998" height="23.939999999999998" viewBox="0 0 20 20"><path d="M7 11.4V2M4.6 4.4L7 2L9.4 4.4M10 14.6H18M15.8 12.4L18 14.6L15.8 16.8M5 16.4L2 19M2 16.4V19H4.6" fill="none" stroke="#b8b8b8" stroke-width="1.2" stroke-linecap="round" stroke-linejoin="round"/><circle cx="7" cy="14.6" r="2.7" fill="#dcdcdc"/></svg>
<div class="t w" style="left:94px;top:152px;">默认</div>
<svg style="left:185.0px;top:163.0px" width="10" height="5.0" viewBox="0 0 10 5.0"><path d="M0.8 0.6L5.0 4.4L9.2 0.6" fill="none" stroke="#e0e0e0" stroke-width="1.5" stroke-linecap="round" stroke-linejoin="round"/></svg>
<div class="t w" style="left:214px;top:152px;">拖拽:</div>
<div class="btn " style="left:266px;top:150.5px;width:70px;height:27.5px;"></div>
<div class="t w" style="left:277px;top:152px;">框选</div>
<svg style="left:320.0px;top:163.0px" width="10" height="5.0" viewBox="0 0 10 5.0"><path d="M0.8 0.6L5.0 4.4L9.2 0.6" fill="none" stroke="#e0e0e0" stroke-width="1.5" stroke-linecap="round" stroke-linejoin="round"/></svg>
<svg style="left:415.5px;top:161.75px" width="13" height="6.5" viewBox="0 0 13 6.5"><path d="M0.8 0.6L6.5 5.9L12.2 0.6" fill="none" stroke="#e0e0e0" stroke-width="1.6" stroke-linecap="round" stroke-linejoin="round"/></svg>
<svg style="left:434px;top:151.5px" width="23" height="25" viewBox="0 0 23 25"><defs><linearGradient id="hx" x1="0" y1="0.1" x2="1" y2="0.9"><stop offset="0" stop-color="#15a6f0"/><stop offset=".28" stop-color="#19b7c0"/><stop offset=".5" stop-color="#3fbf57"/><stop offset=".7" stop-color="#e0902a"/><stop offset="1" stop-color="#f01d2a"/></linearGradient></defs><path d="M11.5 0.8L21.6 6.6V18.4L11.5 24.2L1.4 18.4V6.6Z" fill="url(#hx)"/></svg>
<div class="btn lt" style="left:465px;top:150.5px;width:196px;height:27.5px;border-color:#3a3a3a"></div>
<div class="a" style="left:465px;top:150.5px;width:28px;height:27.5px;background:#4772b3;border-radius:5px 0 0 5px"></div>
<div class="a" style="left:493px;top:151.5px;width:1px;height:25.5px;background:#444;"></div>
<div class="a" style="left:521px;top:151.5px;width:1px;height:25.5px;background:#444;"></div>
<div class="a" style="left:549px;top:151.5px;width:1px;height:25.5px;background:#444;"></div>
<div class="a" style="left:577px;top:151.5px;width:1px;height:25.5px;background:#444;"></div>
<div class="a" style="left:605px;top:151.5px;width:1px;height:25.5px;background:#444;"></div>
<div class="a" style="left:633px;top:151.5px;width:1px;height:25.5px;background:#444;"></div>
<svg style="left:467.03px;top:152.83px;" width="23.939999999999998" height="23.939999999999998" viewBox="0 0 20 20"><rect x="5.2" y="5.2" width="9.6" height="9.6" fill="#ffffff"/><path d="M1.5 5.5V1.5H5.5M14.5 1.5H18.5V5.5M18.5 14.5V18.5H14.5M5.5 18.5H1.5V14.5" fill="none" stroke="#ffffff" stroke-width="1.2" stroke-linecap="round" stroke-linejoin="round"/></svg>
<svg style="left:495.03px;top:152.83px;" width="23.939999999999998" height="23.939999999999998" viewBox="0 0 20 20"><circle cx="10" cy="10" r="7.8" fill="none" stroke="#d0d0d0" stroke-width="1.5"/><path d="M10 2.2A7.8 7.8 0 0 1 17.8 10Q13.9 12.4 10 12.4Z" fill="#d0d0d0"/><path d="M2.2 10Q6.1 12.4 10 12.4V17.8A7.8 7.8 0 0 1 2.2 10Z" fill="#d0d0d0"/></svg>
<svg style="left:523.03px;top:152.83px;" width="23.939999999999998" height="23.939999999999998" viewBox="0 0 20 20"><path d="M5.6 1.6Q6.2 1.6 6.6 2.6L9.4 8.2Q7 10.4 7.6 13.4Q4.6 14.6 1.8 12.8Q1.4 12.2 1.8 11.4L4.6 2.6Q5 1.6 5.6 1.6Z" fill="#d0d0d0"/><circle cx="12.6" cy="3.6" r="2.1" fill="#d0d0d0"/><circle cx="11.6" cy="14.2" r="3.9" fill="none" stroke="#d0d0d0" stroke-width="1.5" stroke-linecap="round" stroke-linejoin="round"/><path d="M9.6 13.8A2.2 2.2 0 0 1 11.4 12" fill="none" stroke="#d0d0d0" stroke-width="1.2" stroke-linecap="round" stroke-linejoin="round"/></svg>
<svg style="left:551.03px;top:152.83px;" width="23.939999999999998" height="23.939999999999998" viewBox="0 0 20 20"><circle cx="10" cy="10.4" r="7.4" fill="none" stroke="#d0d0d0" stroke-width="1.5" stroke-linecap="round" stroke-linejoin="round"/><path d="M7 4.4L10.6 5.4L11 8.2L8.4 9.6L6.4 8.4L4.6 9ZM8.6 11.6L12.4 12.2L13 14.4L10.6 17L9 14.6Z" fill="#d0d0d0"/><path d="M15.6 4.6L18.2 2M2 18.4L4.6 15.8" fill="none" stroke="#d0d0d0" stroke-width="1.2" stroke-linecap="round" stroke-linejoin="round"/></svg>
<svg style="left:579.03px;top:152.83px;" width="23.939999999999998" height="23.939999999999998" viewBox="0 0 20 20"><path d="M8.2 9.6V3A1.8 1.8 0 0 1 11.8 3V9.6H15.6V13.2H4.4V9.6Z" fill="none" stroke="#d0d0d0" stroke-width="1.2" stroke-linecap="round" stroke-linejoin="round"/><path d="M4.4 13.2L2.6 18H6.2L6.8 16L7.4 18H10L10.6 16L11.2 18H17.4L15.6 13.2" fill="none" stroke="#d0d0d0" stroke-width="1.2" stroke-linecap="round" stroke-linejoin="round"/></svg>
<svg style="left:607.03px;top:152.83px;" width="23.939999999999998" height="23.939999999999998" viewBox="0 0 20 20"><rect x="2" y="2.4" width="10.6" height="6" rx="1.6" fill="none" stroke="#d0d0d0" stroke-width="1.2" stroke-linecap="round" stroke-linejoin="round"/><rect x="2" y="11.4" width="10.6" height="6" rx="1.6" fill="none" stroke="#d0d0d0" stroke-width="1.2" stroke-linecap="round" stroke-linejoin="round"/><path d="M3.6 7H11M3.6 16H11" stroke="#d0d0d0" stroke-width="1.6"/><path d="M14.6 4.4H16A2 2 0 0 1 18 6.4V13.6A2 2 0 0 1 16 15.6H15M16.4 13.8L14.6 15.6L16.4 17.4" fill="none" stroke="#d0d0d0" stroke-width="1.2" stroke-linecap="round" stroke-linejoin="round"/></svg>
<svg style="left:635.03px;top:152.83px;" width="23.939999999999998" height="23.939999999999998" viewBox="0 0 20 20"><path d="M3 1.8H17M7 2L8.4 5.6H11.6L13 2M10 5.6V8.4H5A2.3 2.3 0 0 0 5 13H15A2.3 2.3 0 0 1 15 17.6H3.6" fill="none" stroke="#d0d0d0" stroke-width="1.5" stroke-linecap="round" stroke-linejoin="round"/></svg>
<div class="btn " style="left:662px;top:150.5px;width:375px;height:27.5px;background:#1d1d1d;border-color:#2c2c2c"></div>
<svg style="left:667.03px;top:153.33px;" width="23.939999999999998" height="23.939999999999998" viewBox="0 0 20 20"><circle cx="8" cy="8" r="5.6" fill="none" stroke="#e6e6e6" stroke-width="1.5" stroke-linecap="round" stroke-linejoin="round"/><path d="M12.2 12.2L18 18" fill="none" stroke="#e6e6e6" stroke-width="1.5" stroke-linecap="round" stroke-linejoin="round"/></svg>
<div class="t " style="left:699px;top:152px;color:#6e6e6e">搜索</div>
<div class="btn " style="left:1039px;top:150.5px;width:149px;height:27.5px;border-color:#3a3a3a"></div>
<div class="a" style="left:1039px;top:150.5px;width:56px;height:27.5px;background:#545454;border-radius:5px 0 0 5px"></div>
<div class="a" style="left:1066.5px;top:151.5px;width:1px;height:25.5px;background:#444;"></div>
<div class="a" style="left:1141px;top:151.5px;width:1px;height:25.5px;background:#3a3a3a;"></div>
<svg style="left:1041.1px;top:154.4px;" width="22.799999999999997" height="22.799999999999997" viewBox="0 0 20 20"><path d="M2 6.4Q10 17.6 18 6.4" fill="none" stroke="#cfcfcf" stroke-width="1.1" stroke-linecap="round"/></svg>
<svg style="left:1069.6px;top:154.4px;" width="22.799999999999997" height="22.799999999999997" viewBox="0 0 20 20"><path d="M4.4 1.4H15.6V18.6L10 13.6L4.4 18.6Z" fill="#dcdcdc"/></svg>
<svg style="left:1100.03px;top:152.83px;" width="23.939999999999998" height="23.939999999999998" viewBox="0 0 20 20"><path d="M1.6 1.6V15H7.6M1.6 5.4H7.6" fill="none" stroke="#e6e6e6" stroke-width="1.5" stroke-linecap="round" stroke-linejoin="round"/><path d="M9 2H12.6L13.8 3.4H18.4V8.4H9ZM9 11.4H12.6L13.8 12.8H18.4V17.8H9Z" fill="#e6e6e6"/></svg>
<svg style="left:1127.0px;top:163.0px" width="10" height="5.0" viewBox="0 0 10 5.0"><path d="M0.8 0.6L5.0 4.4L9.2 0.6" fill="none" stroke="#e0e0e0" stroke-width="1.5" stroke-linecap="round" stroke-linejoin="round"/></svg>
<svg style="left:1145.03px;top:152.83px;" width="23.939999999999998" height="23.939999999999998" viewBox="0 0 20 20"><path d="M1 1.6H19L12.2 9.6V16L7.8 18.8V9.6Z" fill="#e0e0e0"/></svg>
<svg style="left:1173.0px;top:163.0px" width="10" height="5.0" viewBox="0 0 10 5.0"><path d="M0.8 0.6L5.0 4.4L9.2 0.6" fill="none" stroke="#e0e0e0" stroke-width="1.5" stroke-linecap="round" stroke-linejoin="round"/></svg>
<svg style="left:1189.46px;top:152.26000000000002px;" width="25.08" height="25.08" viewBox="0 0 20 20"><path d="M10 0.8L18.4 3.8V10C18.4 14.6 14.8 17.8 10 19.6C5.2 17.8 1.6 14.6 1.6 10V3.8Z" fill="#d8d8d8"/><path d="M5.8 10.2L8.8 13.2L14.6 6.8" fill="none" stroke="#333" stroke-width="2.2" stroke-linecap="round" stroke-linejoin="round"/></svg>
<div class="btn " style="left:1582px;top:150.5px;width:70px;height:27.5px;"></div>
<div class="t w" style="left:1594px;top:152px;">选项</div>
<svg style="left:1636.0px;top:163.0px" width="10" height="5.0" viewBox="0 0 10 5.0"><path d="M0.8 0.6L5.0 4.4L9.2 0.6" fill="none" stroke="#e0e0e0" stroke-width="1.5" stroke-linecap="round" stroke-linejoin="round"/></svg>
<div class="a" style="left:10px;top:196px;width:58px;height:98px;background:#272727;border-radius:6px"></div>
<div class="a" style="left:10px;top:244px;width:58px;height:1px;background:#343434;"></div>
<div class="a" style="left:10px;top:303px;width:58px;height:198px;background:#272727;border-radius:6px"></div>
<div class="a" style="left:10px;top:303px;width:58px;height:48.5px;background:#4772b3;border-radius:6px 6px 0 0"></div>
<div class="a" style="left:10px;top:401px;width:58px;height:1px;background:#343434;"></div>
<div class="a" style="left:10px;top:451px;width:58px;height:1px;background:#343434;"></div>
<div class="a" style="left:10px;top:510px;width:58px;height:98px;background:#272727;border-radius:6px"></div>
<div class="a" style="left:10px;top:559px;width:58px;height:1px;background:#343434;"></div>
<div class="a" style="left:10px;top:617px;width:58px;height:48px;background:#272727;border-radius:6px"></div>
<svg style="left:59px;top:235px" width="6" height="6" viewBox="0 0 6 6"><path d="M6 0V6H0Z" fill="#8a8a8a"/></svg>
<svg style="left:59px;top:442px" width="6" height="6" viewBox="0 0 6 6"><path d="M6 0V6H0Z" fill="#8a8a8a"/></svg>
<svg style="left:59px;top:550px" width="6" height="6" viewBox="0 0 6 6"><path d="M6 0V6H0Z" fill="#8a8a8a"/></svg>
<svg style="left:59px;top:656px" width="6" height="6" viewBox="0 0 6 6"><path d="M6 0V6H0Z" fill="#8a8a8a"/></svg>
<svg style="left:19.0px;top:200.0px" width="40" height="40" viewBox="0 0 40 40"><rect x="3.5" y="3.5" width="33" height="33" rx="3" fill="none" stroke="#e0aa50" stroke-width="2" stroke-dasharray="6.2 3.2" stroke-dashoffset="3"/><path d="M15.6 11.6L28.8 22.6L20.8 23.2L16.2 29.6Z" fill="#e6e6e6"/></svg>
<svg style="left:19.0px;top:249.5px" width="40" height="40" viewBox="0 0 40 40"><circle cx="20" cy="20" r="16.6" fill="none" stroke="#f2f2f2" stroke-width="2.2"/><circle cx="20" cy="20" r="16.6" fill="none" stroke="#b9464f" stroke-width="2.2" stroke-dasharray="6.5 6.54" stroke-dashoffset="3.2"/><path d="M20 9.6V16.6M20 23.4V30.4M9.6 20H16.6M23.4 20H30.4" stroke="#9a9a9a" stroke-width="1.5"/></svg>
<svg style="left:19.0px;top:307.0px" width="40" height="40" viewBox="0 0 40 40"><path d="M20 3.4L24.4 9.6H15.6ZM20 36.6L24.4 30.4H15.6ZM3.4 20L9.6 15.6V24.4ZM36.6 20L30.4 15.6V24.4Z" fill="#e6e6e6"/><path d="M20 11.6V15.6M20 24.4V28.4M11.6 20H15.6M24.4 20H28.4" stroke="#e6e6e6" stroke-width="2.2"/></svg>
<svg style="left:19.0px;top:356.5px" width="40" height="40" viewBox="0 0 40 40"><path d="M9.4 13.6A13.2 13.2 0 0 1 32.6 15.4M30.6 26.4A13.2 13.2 0 0 1 9.8 28.8" fill="none" stroke="#e6e6e6" stroke-width="1.5"/><path d="M20 14.4L25.6 20L20 25.6L14.4 20Z" fill="#bdbdbd"/><path d="M3.6 18.4H12.4L8 25.6ZM28.4 21.4H37.2L32.8 14.4Z" fill="#e6e6e6"/></svg>
<svg style="left:19.0px;top:406.0px" width="40" height="40" viewBox="0 0 40 40"><rect x="6.4" y="20" width="13.4" height="13.4" fill="#e6e6e6"/><path d="M7.4 16.6V7.4H32.6V32.6H23.2" fill="none" stroke="#bdbdbd" stroke-width="1.5"/><path d="M21.6 18.4L29.4 10.6" fill="none" stroke="#e6e6e6" stroke-width="1.6"/><path d="M24.4 9.4H30.6V15.6Z" fill="#e6e6e6"/></svg>
<svg style="left:19.0px;top:456.0px" width="40" height="40" viewBox="0 0 40 40"><rect x="14" y="14" width="12" height="12" fill="#e6e6e6"/><path d="M20 2.6L23.8 8.2H16.2ZM20 37.4L23.8 31.8H16.2ZM2.6 20L8.2 16.2V23.8ZM37.4 20L31.8 16.2V23.8Z" fill="#e6e6e6"/><path d="M14.4 6.6A14.6 14.6 0 0 0 6.6 14.4M25.6 6.6A14.6 14.6 0 0 1 33.4 14.4M33.4 25.6A14.6 14.6 0 0 1 25.6 33.4M14.4 33.4A14.6 14.6 0 0 1 6.6 25.6" fill="none" stroke="#e6e6e6" stroke-width="1.5"/></svg>
<svg style="left:19.0px;top:514.0px" width="40" height="40" viewBox="0 0 40 40"><path d="M9.6 24.6L28.8 5.4Q30.8 4.6 32.8 6.6Q34.6 8.6 33.8 10.6L14.8 29.8Z" fill="#e6e6e6"/><path d="M8.6 26L13.6 31L6.6 33Z" fill="#e6e6e6"/><path d="M27.4 6.8L32.4 11.8" stroke="#272727" stroke-width="1.2"/><path d="M6.4 33.6C15 38.6 18.6 31 23.6 27.4S33 26.4 36.4 31.8" fill="none" stroke="#8fdcae" stroke-width="1.6"/></svg>
<svg style="left:19.0px;top:564.0px" width="40" height="40" viewBox="0 0 40 40"><path d="M6.2 2H14.4V31.4H37.4V36.8H6.2Z" fill="#e6e6e6"/><path d="M10.6 4.4H14.4M12 6.6H14.4M10.6 8.8H14.4M12 11H14.4M10.6 13.2H14.4M12 15.4H14.4M10.6 17.6H14.4M12 19.8H14.4M10.6 22H14.4M12 24.2H14.4M10.6 26.4H14.4M12 28.6H14.4M16.8 32.6V35.2M19 33.8V35.2M21.2 32.6V35.2M23.4 33.8V35.2M25.6 32.6V35.2M27.8 33.8V35.2M30 32.6V35.2M32.2 33.8V35.2M34.4 32.6V35.2" stroke="#272727" stroke-width=".9"/><path d="M15.6 30.2V15.8A14.4 14.4 0 0 1 30 30.2Z" fill="#8fdcae"/><path d="M15.6 12.4A17.8 17.8 0 0 1 33.4 30.2" fill="none" stroke="#8fdcae" stroke-width="1.5"/></svg>
<svg style="left:19.0px;top:621.0px" width="40" height="40" viewBox="0 0 40 40"><path d="M6.4 2.4V12.4M1.4 7.4H11.4" stroke="#8fdcae" stroke-width="2.6"/><path d="M11.6 17.4H30.4V37H11.6ZM11.6 17.4L18.6 10.6H37.4L30.4 17.4M37.4 10.6V30.2L30.4 37" fill="none" stroke="#8fdcae" stroke-width="1.5" stroke-linejoin="round"/></svg>
<div class="t " style="left:94px;top:195px;text-shadow:0 0 3px rgba(0,0,0,.9),0 1px 2px rgba(0,0,0,.8);color:#fff;-webkit-text-stroke:.3px #fff">正交左视图<span style="letter-spacing:2px"> (</span>局部<span style="margin-left:1.5px">)</span></div>
<div class="t " style="left:94px;top:222px;text-shadow:0 0 3px rgba(0,0,0,.9),0 1px 2px rgba(0,0,0,.8);color:#fff;-webkit-text-stroke:.3px #fff"><span style="letter-spacing:1px">(41)</span> 场景集合<span style="letter-spacing:1.4px"> | </span>柱体<span class="n">.012</span></div>
<div class="t " style="left:94px;top:249px;text-shadow:0 0 3px rgba(0,0,0,.9),0 1px 2px rgba(0,0,0,.8);color:#fff;-webkit-text-stroke:.3px #fff">分米</div>
<svg style="left:1480px;top:190px" width="140" height="140" viewBox="1480 190 140 140">
<path d="M1550 258V222" stroke="#2f83e0" stroke-width="2.4"/><path d="M1550 258V294" stroke="#2f83e0" stroke-width="2.4"/>
<path d="M1514 258H1586" stroke="#7db51d" stroke-width="2.4"/>
<circle cx="1550" cy="306" r="11.3" fill="#3b5477" stroke="#2f83e0" stroke-width="1.4"/>
<circle cx="1598" cy="258" r="11.3" fill="#566d2c" stroke="#7db51d" stroke-width="1.4"/>
<circle cx="1550" cy="210" r="12" fill="#2f83e0"/>
<circle cx="1502" cy="258" r="12" fill="#7db51d"/>
<circle cx="1550" cy="258" r="12.6" fill="#f5375a" stroke="#f77f95" stroke-width="1"/>
<text x="1550" y="215.4" text-anchor="middle" font-family="Liberation Sans,sans-serif" font-size="15" fill="#0d2340" stroke="#0d2340" stroke-width=".5">Z</text>
<text x="1502" y="263.6" text-anchor="middle" font-family="Liberation Sans,sans-serif" font-size="15.5" fill="#1e2d05" stroke="#1e2d05" stroke-width=".5">Y</text>
<text x="1550.5" y="263.4" text-anchor="middle" font-family="Liberation Sans,sans-serif" font-size="15" fill="#3f0712" stroke="#3f0712" stroke-width=".5" letter-spacing="0.5"><tspan letter-spacing="2.2">-</tspan>X</text>
</svg>
<div class="a" style="left:1571.0px;top:319.5px;width:41px;height:41px;border-radius:50%;background:rgba(42,42,42,.82)"></div>
<div class="a" style="left:1571.0px;top:364.5px;width:41px;height:41px;border-radius:50%;background:rgba(42,42,42,.82)"></div>
<div class="a" style="left:1571.0px;top:409.5px;width:41px;height:41px;border-radius:50%;background:rgba(42,42,42,.82)"></div>
<div class="a" style="left:1571.0px;top:454.5px;width:41px;height:41px;border-radius:50%;background:rgba(42,42,42,.82)"></div>
<svg style="left:1578px;top:326px" width="28" height="28" viewBox="0 0 28 28"><circle cx="11.6" cy="11.6" r="8.4" fill="#e2e2e2"/><path d="M11.6 7.4V15.8M7.4 11.6H15.8" stroke="#333" stroke-width="1.5"/><path d="M18.2 18.2L25.6 25.6" stroke="#e2e2e2" stroke-width="2.6" stroke-linecap="round"/></svg>
<svg style="left:1577px;top:370px" width="29" height="30" viewBox="0 0 29 30"><path d="M10.4 14.6L8.4 6M14 13.6L13.7 3.8M17.6 14L18.9 5M21 15.8L24 8.8M8.6 21.4L3.6 15.8" fill="none" stroke="#e2e2e2" stroke-width="3.3" stroke-linecap="round"/><path d="M8.2 13.4L22.6 14.4L22 21C21 25.6 17.8 27.6 14.4 27.6C11 27.6 8.6 25.8 6.8 22.4Z" fill="#e2e2e2" stroke="#e2e2e2" stroke-width="1" stroke-linejoin="round"/></svg>
<svg style="left:1577px;top:415px" width="30" height="30" viewBox="0 0 30 30"><circle cx="8" cy="11.6" r="4.2" fill="none" stroke="#e2e2e2" stroke-width="1.6"/><circle cx="17.6" cy="8.4" r="6" fill="none" stroke="#e2e2e2" stroke-width="1.6"/><circle cx="17.8" cy="8.4" r="1.7" fill="#e2e2e2"/><path d="M6.6 18V25.4H20.4V18" fill="none" stroke="#e2e2e2" stroke-width="1.6"/><path d="M22.4 21.6L27.6 18.6V25L22.4 22Z" fill="none" stroke="#e2e2e2" stroke-width="1.4" stroke-linejoin="round"/><path d="M2.6 18.4V24.6" stroke="#e2e2e2" stroke-width="1.4" stroke-dasharray="2 1.6"/></svg>
<svg style="left:1579px;top:462px" width="26" height="26" viewBox="0 0 26 26"><path d="M1.4 1.4H24.6V24.6H1.4ZM9.2 1.4V24.6M16.8 1.4V24.6M1.4 9.2H24.6M1.4 16.8H24.6" fill="none" stroke="#e2e2e2" stroke-width="1.9"/></svg>
<div class="a" style="left:1634px;top:190px;width:26.5px;height:56px;background:#1c1c1c;border-radius:6px 4px 4px 6px"></div>
<div class="t" style="left:1587px;top:206.0px;width:120px;text-align:center;transform:rotate(90deg);color:#a8a8a8;">条目</div>
<div class="a" style="left:1634px;top:252px;width:26.5px;height:56px;background:#1c1c1c;border-radius:6px 4px 4px 6px"></div>
<div class="t" style="left:1587px;top:268.0px;width:120px;text-align:center;transform:rotate(90deg);color:#a8a8a8;">工具</div>
<div class="a" style="left:1634px;top:314px;width:26.5px;height:56px;background:#1c1c1c;border-radius:6px 4px 4px 6px"></div>
<div class="t" style="left:1587px;top:330.0px;width:120px;text-align:center;transform:rotate(90deg);color:#a8a8a8;">视图</div>
<div class="a" style="left:1634px;top:376px;width:26.5px;height:56px;background:#1c1c1c;border-radius:6px 4px 4px 6px"></div>
<div class="t" style="left:1587px;top:392.0px;width:120px;text-align:center;transform:rotate(90deg);color:#a8a8a8;">动画</div>
<div class="a" style="left:1634px;top:438px;width:26.5px;height:104px;background:#1c1c1c;border-radius:6px 4px 4px 6px"></div>
<div class="t" style="left:1587px;top:478.0px;width:120px;text-align:center;transform:rotate(90deg);color:#a8a8a8;letter-spacing:.5px;">BlenderKit</div>
<div class="a" style="left:1670px;top:107px;width:427px;height:387px;border-radius:8px;overflow:hidden"><div class="a" style="left:-1670px;top:-107px;width:2108px;height:700px"><div class="a" style="left:1670px;top:128.0px;width:427px;height:29px;background:#272727;"></div><div class="a" style="left:1670px;top:157.0px;width:427px;height:29px;background:#2b2b2b;"></div><div class="a" style="left:1670px;top:186.0px;width:427px;height:29px;background:#272727;"></div><div class="a" style="left:1670px;top:215.0px;width:427px;height:29px;background:#2b2b2b;"></div><div class="a" style="left:1670px;top:244.0px;width:427px;height:29px;background:#272727;"></div><div class="a" style="left:1670px;top:273.0px;width:427px;height:29px;background:#2b2b2b;"></div><div class="a" style="left:1670px;top:302.0px;width:427px;height:29px;background:#272727;"></div><div class="a" style="left:1670px;top:331.0px;width:427px;height:29px;background:#2b2b2b;"></div><div class="a" style="left:1670px;top:360.0px;width:427px;height:29px;background:#272727;"></div><div class="a" style="left:1670px;top:389.0px;width:427px;height:29px;background:#2b2b2b;"></div><div class="a" style="left:1670px;top:418.0px;width:427px;height:29px;background:#272727;"></div><div class="a" style="left:1670px;top:447.0px;width:427px;height:29px;background:#2b2b2b;"></div><div class="a" style="left:1670px;top:476.0px;width:427px;height:29px;background:#272727;"></div><svg style="left:1739.0px;top:135.5px" width="7.0" height="14" viewBox="0 0 7.0 14"><path d="M0.7 0.8L6.3 7.0L0.7 13.2" fill="none" stroke="#b8b8b8" stroke-width="1.5" stroke-linecap="round" stroke-linejoin="round"/></svg><svg style="left:1760.6px;top:131.1px;" width="22.799999999999997" height="22.799999999999997" viewBox="0 0 20 20"><path d="M2.7 3H17.3L10 17.4Z" fill="none" stroke="#c98850" stroke-width="3.7" stroke-linejoin="round"/></svg><div class="t " style="left:1791.5px;top:132px;color:#cdcdcd">柱体<span class="n">.013</span></div><svg style="left:1894.67px;top:131.37px;" width="21.659999999999997" height="21.659999999999997" viewBox="0 0 20 20"><path d="M1.4 15L8 8.4C7 5.2 9.2 1.8 13 1.4L11.6 5.6L14.4 8.4L18.6 7C18.2 10.8 14.8 13 11.6 12L5 18.6A2.55 2.55 0 0 1 1.4 15Z" fill="none" stroke="#6a8fdc" stroke-width="1.55" stroke-linejoin="round"/></svg><svg style="left:1923.1px;top:130.6px;" width="22.799999999999997" height="22.799999999999997" viewBox="0 0 20 20"><path d="M5.4 3.2H14.6M4.2 5.4L9 14.6M15.8 5.4L11 14.6" fill="none" stroke="#1bbf97" stroke-width="1.5"/><rect x="1.4" y="1.2" width="4" height="4" fill="none" stroke="#1bbf97" stroke-width="1.4"/><rect x="14.6" y="1.2" width="4" height="4" fill="none" stroke="#1bbf97" stroke-width="1.4"/><rect x="8" y="14.6" width="4" height="4" fill="none" stroke="#1bbf97" stroke-width="1.4"/></svg><svg style="left:2029.525px;top:132.025px;" width="19.95" height="19.95" viewBox="0 0 20 20"><path d="M0.6 10C4.2 3.6 15.8 3.6 19.4 10C15.8 16.4 4.2 16.4 0.6 10Z" fill="#ececec"/><circle cx="10" cy="10" r="4.5" fill="#2a2a2a"/><circle cx="10" cy="10" r="2.2" fill="#e4e4e4"/></svg><svg style="left:2057.955px;top:131.455px;" width="21.09" height="21.09" viewBox="0 0 20 20"><path d="M1 5.8H5.2L6.8 3H13.2L14.8 5.8H19V18H1Z" fill="#ececec"/><circle cx="10" cy="11.6" r="5.1" fill="#2a2a2a"/><circle cx="10" cy="11.6" r="3.3" fill="none" stroke="#ececec" stroke-width="1.4"/></svg><svg style="left:1739.0px;top:164.5px" width="7.0" height="14" viewBox="0 0 7.0 14"><path d="M0.7 0.8L6.3 7.0L0.7 13.2" fill="none" stroke="#b8b8b8" stroke-width="1.5" stroke-linecap="round" stroke-linejoin="round"/></svg><svg style="left:1760.6px;top:160.1px;" width="22.799999999999997" height="22.799999999999997" viewBox="0 0 20 20"><path d="M2.7 3H17.3L10 17.4Z" fill="none" stroke="#c98850" stroke-width="3.7" stroke-linejoin="round"/></svg><div class="t " style="left:1791.5px;top:161px;color:#cdcdcd">柱体<span class="n">.014</span></div><svg style="left:1894.67px;top:160.37px;" width="21.659999999999997" height="21.659999999999997" viewBox="0 0 20 20"><path d="M1.4 15L8 8.4C7 5.2 9.2 1.8 13 1.4L11.6 5.6L14.4 8.4L18.6 7C18.2 10.8 14.8 13 11.6 12L5 18.6A2.55 2.55 0 0 1 1.4 15Z" fill="none" stroke="#6a8fdc" stroke-width="1.55" stroke-linejoin="round"/></svg><svg style="left:1923.1px;top:159.6px;" width="22.799999999999997" height="22.799999999999997" viewBox="0 0 20 20"><path d="M5.4 3.2H14.6M4.2 5.4L9 14.6M15.8 5.4L11 14.6" fill="none" stroke="#1bbf97" stroke-width="1.5"/><rect x="1.4" y="1.2" width="4" height="4" fill="none" stroke="#1bbf97" stroke-width="1.4"/><rect x="14.6" y="1.2" width="4" height="4" fill="none" stroke="#1bbf97" stroke-width="1.4"/><rect x="8" y="14.6" width="4" height="4" fill="none" stroke="#1bbf97" stroke-width="1.4"/></svg><svg style="left:2029.525px;top:161.025px;" width="19.95" height="19.95" viewBox="0 0 20 20"><path d="M0.6 10C4.2 3.6 15.8 3.6 19.4 10C15.8 16.4 4.2 16.4 0.6 10Z" fill="#ececec"/><circle cx="10" cy="10" r="4.5" fill="#2a2a2a"/><circle cx="10" cy="10" r="2.2" fill="#e4e4e4"/></svg><svg style="left:2057.955px;top:160.455px;" width="21.09" height="21.09" viewBox="0 0 20 20"><path d="M1 5.8H5.2L6.8 3H13.2L14.8 5.8H19V18H1Z" fill="#ececec"/><circle cx="10" cy="11.6" r="5.1" fill="#2a2a2a"/><circle cx="10" cy="11.6" r="3.3" fill="none" stroke="#ececec" stroke-width="1.4"/></svg><svg style="left:1739.0px;top:193.5px" width="7.0" height="14" viewBox="0 0 7.0 14"><path d="M0.7 0.8L6.3 7.0L0.7 13.2" fill="none" stroke="#b8b8b8" stroke-width="1.5" stroke-linecap="round" stroke-linejoin="round"/></svg><svg style="left:1760.6px;top:189.1px;" width="22.799999999999997" height="22.799999999999997" viewBox="0 0 20 20"><path d="M2.7 3H17.3L10 17.4Z" fill="none" stroke="#c98850" stroke-width="3.7" stroke-linejoin="round"/></svg><div class="t " style="left:1791.5px;top:190px;color:#cdcdcd">柱体<span class="n">.015</span></div><svg style="left:1894.67px;top:189.37px;" width="21.659999999999997" height="21.659999999999997" viewBox="0 0 20 20"><path d="M1.4 15L8 8.4C7 5.2 9.2 1.8 13 1.4L11.6 5.6L14.4 8.4L18.6 7C18.2 10.8 14.8 13 11.6 12L5 18.6A2.55 2.55 0 0 1 1.4 15Z" fill="none" stroke="#6a8fdc" stroke-width="1.55" stroke-linejoin="round"/></svg><svg style="left:1923.1px;top:188.6px;" width="22.799999999999997" height="22.799999999999997" viewBox="0 0 20 20"><path d="M5.4 3.2H14.6M4.2 5.4L9 14.6M15.8 5.4L11 14.6" fill="none" stroke="#1bbf97" stroke-width="1.5"/><rect x="1.4" y="1.2" width="4" height="4" fill="none" stroke="#1bbf97" stroke-width="1.4"/><rect x="14.6" y="1.2" width="4" height="4" fill="none" stroke="#1bbf97" stroke-width="1.4"/><rect x="8" y="14.6" width="4" height="4" fill="none" stroke="#1bbf97" stroke-width="1.4"/></svg><svg style="left:2029.525px;top:190.025px;" width="19.95" height="19.95" viewBox="0 0 20 20"><path d="M0.6 10C4.2 3.6 15.8 3.6 19.4 10C15.8 16.4 4.2 16.4 0.6 10Z" fill="#ececec"/><circle cx="10" cy="10" r="4.5" fill="#2a2a2a"/><circle cx="10" cy="10" r="2.2" fill="#e4e4e4"/></svg><svg style="left:2057.955px;top:189.455px;" width="21.09" height="21.09" viewBox="0 0 20 20"><path d="M1 5.8H5.2L6.8 3H13.2L14.8 5.8H19V18H1Z" fill="#ececec"/><circle cx="10" cy="11.6" r="5.1" fill="#2a2a2a"/><circle cx="10" cy="11.6" r="3.3" fill="none" stroke="#ececec" stroke-width="1.4"/></svg><svg style="left:1739.0px;top:222.5px" width="7.0" height="14" viewBox="0 0 7.0 14"><path d="M0.7 0.8L6.3 7.0L0.7 13.2" fill="none" stroke="#b8b8b8" stroke-width="1.5" stroke-linecap="round" stroke-linejoin="round"/></svg><svg style="left:1760.6px;top:218.1px;" width="22.799999999999997" height="22.799999999999997" viewBox="0 0 20 20"><path d="M2.7 3H17.3L10 17.4Z" fill="none" stroke="#c98850" stroke-width="3.7" stroke-linejoin="round"/></svg><div class="t " style="left:1791.5px;top:219px;color:#cdcdcd">球体</div><svg style="left:1858.17px;top:218.37px;" width="21.659999999999997" height="21.659999999999997" viewBox="0 0 20 20"><path d="M1.4 15L8 8.4C7 5.2 9.2 1.8 13 1.4L11.6 5.6L14.4 8.4L18.6 7C18.2 10.8 14.8 13 11.6 12L5 18.6A2.55 2.55 0 0 1 1.4 15Z" fill="none" stroke="#6a8fdc" stroke-width="1.55" stroke-linejoin="round"/></svg><svg style="left:1886.6px;top:217.6px;" width="22.799999999999997" height="22.799999999999997" viewBox="0 0 20 20"><path d="M5.4 3.2H14.6M4.2 5.4L9 14.6M15.8 5.4L11 14.6" fill="none" stroke="#1bbf97" stroke-width="1.5"/><rect x="1.4" y="1.2" width="4" height="4" fill="none" stroke="#1bbf97" stroke-width="1.4"/><rect x="14.6" y="1.2" width="4" height="4" fill="none" stroke="#1bbf97" stroke-width="1.4"/><rect x="8" y="14.6" width="4" height="4" fill="none" stroke="#1bbf97" stroke-width="1.4"/></svg><svg style="left:2029.525px;top:219.025px;" width="19.95" height="19.95" viewBox="0 0 20 20"><path d="M0.6 10C4.2 3.6 15.8 3.6 19.4 10C15.8 16.4 4.2 16.4 0.6 10Z" fill="#ececec"/><circle cx="10" cy="10" r="4.5" fill="#2a2a2a"/><circle cx="10" cy="10" r="2.2" fill="#e4e4e4"/></svg><svg style="left:2057.955px;top:218.455px;" width="21.09" height="21.09" viewBox="0 0 20 20"><path d="M1 5.8H5.2L6.8 3H13.2L14.8 5.8H19V18H1Z" fill="#ececec"/><circle cx="10" cy="11.6" r="5.1" fill="#2a2a2a"/><circle cx="10" cy="11.6" r="3.3" fill="none" stroke="#ececec" stroke-width="1.4"/></svg><svg style="left:1739.0px;top:251.5px" width="7.0" height="14" viewBox="0 0 7.0 14"><path d="M0.7 0.8L6.3 7.0L0.7 13.2" fill="none" stroke="#b8b8b8" stroke-width="1.5" stroke-linecap="round" stroke-linejoin="round"/></svg><svg style="left:1760.6px;top:247.1px;" width="22.799999999999997" height="22.799999999999997" viewBox="0 0 20 20"><path d="M2.7 3H17.3L10 17.4Z" fill="none" stroke="#c98850" stroke-width="3.7" stroke-linejoin="round"/></svg><div class="t " style="left:1791.5px;top:248px;color:#cdcdcd">球体<span class="n">.001</span></div><svg style="left:1894.67px;top:247.37px;" width="21.659999999999997" height="21.659999999999997" viewBox="0 0 20 20"><path d="M1.4 15L8 8.4C7 5.2 9.2 1.8 13 1.4L11.6 5.6L14.4 8.4L18.6 7C18.2 10.8 14.8 13 11.6 12L5 18.6A2.55 2.55 0 0 1 1.4 15Z" fill="none" stroke="#6a8fdc" stroke-width="1.55" stroke-linejoin="round"/></svg><svg style="left:1923.1px;top:246.6px;" width="22.799999999999997" height="22.799999999999997" viewBox="0 0 20 20"><path d="M5.4 3.2H14.6M4.2 5.4L9 14.6M15.8 5.4L11 14.6" fill="none" stroke="#1bbf97" stroke-width="1.5"/><rect x="1.4" y="1.2" width="4" height="4" fill="none" stroke="#1bbf97" stroke-width="1.4"/><rect x="14.6" y="1.2" width="4" height="4" fill="none" stroke="#1bbf97" stroke-width="1.4"/><rect x="8" y="14.6" width="4" height="4" fill="none" stroke="#1bbf97" stroke-width="1.4"/></svg><svg style="left:2029.525px;top:248.025px;" width="19.95" height="19.95" viewBox="0 0 20 20"><path d="M0.6 10C4.2 3.6 15.8 3.6 19.4 10C15.8 16.4 4.2 16.4 0.6 10Z" fill="#ececec"/><circle cx="10" cy="10" r="4.5" fill="#2a2a2a"/><circle cx="10" cy="10" r="2.2" fill="#e4e4e4"/></svg><svg style="left:2057.955px;top:247.455px;" width="21.09" height="21.09" viewBox="0 0 20 20"><path d="M1 5.8H5.2L6.8 3H13.2L14.8 5.8H19V18H1Z" fill="#ececec"/><circle cx="10" cy="11.6" r="5.1" fill="#2a2a2a"/><circle cx="10" cy="11.6" r="3.3" fill="none" stroke="#ececec" stroke-width="1.4"/></svg><svg style="left:1739.0px;top:280.5px" width="7.0" height="14" viewBox="0 0 7.0 14"><path d="M0.7 0.8L6.3 7.0L0.7 13.2" fill="none" stroke="#b8b8b8" stroke-width="1.5" stroke-linecap="round" stroke-linejoin="round"/></svg><svg style="left:1760.6px;top:276.1px;" width="22.799999999999997" height="22.799999999999997" viewBox="0 0 20 20"><path d="M2.7 3H17.3L10 17.4Z" fill="none" stroke="#c98850" stroke-width="3.7" stroke-linejoin="round"/></svg><div class="t " style="left:1791.5px;top:277px;color:#cdcdcd">立方体</div><svg style="left:1874.67px;top:276.37px;" width="21.659999999999997" height="21.659999999999997" viewBox="0 0 20 20"><path d="M1.4 15L8 8.4C7 5.2 9.2 1.8 13 1.4L11.6 5.6L14.4 8.4L18.6 7C18.2 10.8 14.8 13 11.6 12L5 18.6A2.55 2.55 0 0 1 1.4 15Z" fill="none" stroke="#6a8fdc" stroke-width="1.55" stroke-linejoin="round"/></svg><svg style="left:1903.1px;top:275.6px;" width="22.799999999999997" height="22.799999999999997" viewBox="0 0 20 20"><path d="M5.4 3.2H14.6M4.2 5.4L9 14.6M15.8 5.4L11 14.6" fill="none" stroke="#1bbf97" stroke-width="1.5"/><rect x="1.4" y="1.2" width="4" height="4" fill="none" stroke="#1bbf97" stroke-width="1.4"/><rect x="14.6" y="1.2" width="4" height="4" fill="none" stroke="#1bbf97" stroke-width="1.4"/><rect x="8" y="14.6" width="4" height="4" fill="none" stroke="#1bbf97" stroke-width="1.4"/></svg><svg style="left:2029.525px;top:277.025px;" width="19.95" height="19.95" viewBox="0 0 20 20"><path d="M0.6 10C4.2 3.6 15.8 3.6 19.4 10C15.8 16.4 4.2 16.4 0.6 10Z" fill="#ececec"/><circle cx="10" cy="10" r="4.5" fill="#2a2a2a"/><circle cx="10" cy="10" r="2.2" fill="#e4e4e4"/></svg><svg style="left:2057.955px;top:276.455px;" width="21.09" height="21.09" viewBox="0 0 20 20"><path d="M1 5.8H5.2L6.8 3H13.2L14.8 5.8H19V18H1Z" fill="#ececec"/><circle cx="10" cy="11.6" r="5.1" fill="#2a2a2a"/><circle cx="10" cy="11.6" r="3.3" fill="none" stroke="#ececec" stroke-width="1.4"/></svg><svg style="left:1739.0px;top:309.5px" width="7.0" height="14" viewBox="0 0 7.0 14"><path d="M0.7 0.8L6.3 7.0L0.7 13.2" fill="none" stroke="#b8b8b8" stroke-width="1.5" stroke-linecap="round" stroke-linejoin="round"/></svg><svg style="left:1760.6px;top:305.1px;" width="22.799999999999997" height="22.799999999999997" viewBox="0 0 20 20"><path d="M2.7 3H17.3L10 17.4Z" fill="none" stroke="#c98850" stroke-width="3.7" stroke-linejoin="round"/></svg><div class="t " style="left:1791.5px;top:306px;color:#cdcdcd">立方体<span class="n">.001</span></div><svg style="left:1911.17px;top:305.37px;" width="21.659999999999997" height="21.659999999999997" viewBox="0 0 20 20"><path d="M1.4 15L8 8.4C7 5.2 9.2 1.8 13 1.4L11.6 5.6L14.4 8.4L18.6 7C18.2 10.8 14.8 13 11.6 12L5 18.6A2.55 2.55 0 0 1 1.4 15Z" fill="none" stroke="#6a8fdc" stroke-width="1.55" stroke-linejoin="round"/></svg><svg style="left:1939.6px;top:304.6px;" width="22.799999999999997" height="22.799999999999997" viewBox="0 0 20 20"><path d="M5.4 3.2H14.6M4.2 5.4L9 14.6M15.8 5.4L11 14.6" fill="none" stroke="#1bbf97" stroke-width="1.5"/><rect x="1.4" y="1.2" width="4" height="4" fill="none" stroke="#1bbf97" stroke-width="1.4"/><rect x="14.6" y="1.2" width="4" height="4" fill="none" stroke="#1bbf97" stroke-width="1.4"/><rect x="8" y="14.6" width="4" height="4" fill="none" stroke="#1bbf97" stroke-width="1.4"/></svg><svg style="left:2029.525px;top:306.025px;" width="19.95" height="19.95" viewBox="0 0 20 20"><path d="M0.6 10C4.2 3.6 15.8 3.6 19.4 10C15.8 16.4 4.2 16.4 0.6 10Z" fill="#ececec"/><circle cx="10" cy="10" r="4.5" fill="#2a2a2a"/><circle cx="10" cy="10" r="2.2" fill="#e4e4e4"/></svg><svg style="left:2057.955px;top:305.455px;" width="21.09" height="21.09" viewBox="0 0 20 20"><path d="M1 5.8H5.2L6.8 3H13.2L14.8 5.8H19V18H1Z" fill="#ececec"/><circle cx="10" cy="11.6" r="5.1" fill="#2a2a2a"/><circle cx="10" cy="11.6" r="3.3" fill="none" stroke="#ececec" stroke-width="1.4"/></svg><svg style="left:1739.0px;top:338.5px" width="7.0" height="14" viewBox="0 0 7.0 14"><path d="M0.7 0.8L6.3 7.0L0.7 13.2" fill="none" stroke="#b8b8b8" stroke-width="1.5" stroke-linecap="round" stroke-linejoin="round"/></svg><svg style="left:1760.6px;top:334.1px;" width="22.799999999999997" height="22.799999999999997" viewBox="0 0 20 20"><path d="M2.7 3H17.3L10 17.4Z" fill="none" stroke="#c98850" stroke-width="3.7" stroke-linejoin="round"/></svg><div class="t " style="left:1791.5px;top:335px;color:#cdcdcd">立方体<span class="n">.002</span></div><svg style="left:1911.17px;top:334.37px;" width="21.659999999999997" height="21.659999999999997" viewBox="0 0 20 20"><path d="M1.4 15L8 8.4C7 5.2 9.2 1.8 13 1.4L11.6 5.6L14.4 8.4L18.6 7C18.2 10.8 14.8 13 11.6 12L5 18.6A2.55 2.55 0 0 1 1.4 15Z" fill="none" stroke="#6a8fdc" stroke-width="1.55" stroke-linejoin="round"/></svg><svg style="left:1939.6px;top:333.6px;" width="22.799999999999997" height="22.799999999999997" viewBox="0 0 20 20"><path d="M5.4 3.2H14.6M4.2 5.4L9 14.6M15.8 5.4L11 14.6" fill="none" stroke="#1bbf97" stroke-width="1.5"/><rect x="1.4" y="1.2" width="4" height="4" fill="none" stroke="#1bbf97" stroke-width="1.4"/><rect x="14.6" y="1.2" width="4" height="4" fill="none" stroke="#1bbf97" stroke-width="1.4"/><rect x="8" y="14.6" width="4" height="4" fill="none" stroke="#1bbf97" stroke-width="1.4"/></svg><svg style="left:2029.525px;top:335.025px;" width="19.95" height="19.95" viewBox="0 0 20 20"><path d="M0.6 10C4.2 3.6 15.8 3.6 19.4 10C15.8 16.4 4.2 16.4 0.6 10Z" fill="#ececec"/><circle cx="10" cy="10" r="4.5" fill="#2a2a2a"/><circle cx="10" cy="10" r="2.2" fill="#e4e4e4"/></svg><svg style="left:2057.955px;top:334.455px;" width="21.09" height="21.09" viewBox="0 0 20 20"><path d="M1 5.8H5.2L6.8 3H13.2L14.8 5.8H19V18H1Z" fill="#ececec"/><circle cx="10" cy="11.6" r="5.1" fill="#2a2a2a"/><circle cx="10" cy="11.6" r="3.3" fill="none" stroke="#ececec" stroke-width="1.4"/></svg><svg style="left:1739.0px;top:367.5px" width="7.0" height="14" viewBox="0 0 7.0 14"><path d="M0.7 0.8L6.3 7.0L0.7 13.2" fill="none" stroke="#b8b8b8" stroke-width="1.5" stroke-linecap="round" stroke-linejoin="round"/></svg><svg style="left:1760.6px;top:363.1px;" width="22.799999999999997" height="22.799999999999997" viewBox="0 0 20 20"><path d="M2.7 3H17.3L10 17.4Z" fill="none" stroke="#c98850" stroke-width="3.7" stroke-linejoin="round"/></svg><div class="t " style="left:1791.5px;top:364px;color:#cdcdcd">立方体<span class="n">.003</span></div><svg style="left:1911.17px;top:363.37px;" width="21.659999999999997" height="21.659999999999997" viewBox="0 0 20 20"><path d="M1.4 15L8 8.4C7 5.2 9.2 1.8 13 1.4L11.6 5.6L14.4 8.4L18.6 7C18.2 10.8 14.8 13 11.6 12L5 18.6A2.55 2.55 0 0 1 1.4 15Z" fill="none" stroke="#6a8fdc" stroke-width="1.55" stroke-linejoin="round"/></svg><svg style="left:1939.6px;top:362.6px;" width="22.799999999999997" height="22.799999999999997" viewBox="0 0 20 20"><path d="M5.4 3.2H14.6M4.2 5.4L9 14.6M15.8 5.4L11 14.6" fill="none" stroke="#1bbf97" stroke-width="1.5"/><rect x="1.4" y="1.2" width="4" height="4" fill="none" stroke="#1bbf97" stroke-width="1.4"/><rect x="14.6" y="1.2" width="4" height="4" fill="none" stroke="#1bbf97" stroke-width="1.4"/><rect x="8" y="14.6" width="4" height="4" fill="none" stroke="#1bbf97" stroke-width="1.4"/></svg><svg style="left:2029.525px;top:364.025px;" width="19.95" height="19.95" viewBox="0 0 20 20"><path d="M0.6 10C4.2 3.6 15.8 3.6 19.4 10C15.8 16.4 4.2 16.4 0.6 10Z" fill="#ececec"/><circle cx="10" cy="10" r="4.5" fill="#2a2a2a"/><circle cx="10" cy="10" r="2.2" fill="#e4e4e4"/></svg><svg style="left:2057.955px;top:363.455px;" width="21.09" height="21.09" viewBox="0 0 20 20"><path d="M1 5.8H5.2L6.8 3H13.2L14.8 5.8H19V18H1Z" fill="#ececec"/><circle cx="10" cy="11.6" r="5.1" fill="#2a2a2a"/><circle cx="10" cy="11.6" r="3.3" fill="none" stroke="#ececec" stroke-width="1.4"/></svg><svg style="left:1739.0px;top:396.5px" width="7.0" height="14" viewBox="0 0 7.0 14"><path d="M0.7 0.8L6.3 7.0L0.7 13.2" fill="none" stroke="#b8b8b8" stroke-width="1.5" stroke-linecap="round" stroke-linejoin="round"/></svg><svg style="left:1760.6px;top:392.1px;" width="22.799999999999997" height="22.799999999999997" viewBox="0 0 20 20"><path d="M2.7 3H17.3L10 17.4Z" fill="none" stroke="#c98850" stroke-width="3.7" stroke-linejoin="round"/></svg><div class="t " style="left:1791.5px;top:393px;color:#cdcdcd">立方体<span class="n">.004</span></div><svg style="left:1911.17px;top:392.37px;" width="21.659999999999997" height="21.659999999999997" viewBox="0 0 20 20"><path d="M1.4 15L8 8.4C7 5.2 9.2 1.8 13 1.4L11.6 5.6L14.4 8.4L18.6 7C18.2 10.8 14.8 13 11.6 12L5 18.6A2.55 2.55 0 0 1 1.4 15Z" fill="none" stroke="#6a8fdc" stroke-width="1.55" stroke-linejoin="round"/></svg><svg style="left:1939.6px;top:391.6px;" width="22.799999999999997" height="22.799999999999997" viewBox="0 0 20 20"><path d="M5.4 3.2H14.6M4.2 5.4L9 14.6M15.8 5.4L11 14.6" fill="none" stroke="#1bbf97" stroke-width="1.5"/><rect x="1.4" y="1.2" width="4" height="4" fill="none" stroke="#1bbf97" stroke-width="1.4"/><rect x="14.6" y="1.2" width="4" height="4" fill="none" stroke="#1bbf97" stroke-width="1.4"/><rect x="8" y="14.6" width="4" height="4" fill="none" stroke="#1bbf97" stroke-width="1.4"/></svg><svg style="left:2029.525px;top:393.025px;" width="19.95" height="19.95" viewBox="0 0 20 20"><path d="M0.6 10C4.2 3.6 15.8 3.6 19.4 10C15.8 16.4 4.2 16.4 0.6 10Z" fill="#ececec"/><circle cx="10" cy="10" r="4.5" fill="#2a2a2a"/><circle cx="10" cy="10" r="2.2" fill="#e4e4e4"/></svg><svg style="left:2057.955px;top:392.455px;" width="21.09" height="21.09" viewBox="0 0 20 20"><path d="M1 5.8H5.2L6.8 3H13.2L14.8 5.8H19V18H1Z" fill="#ececec"/><circle cx="10" cy="11.6" r="5.1" fill="#2a2a2a"/><circle cx="10" cy="11.6" r="3.3" fill="none" stroke="#ececec" stroke-width="1.4"/></svg><svg style="left:1739.0px;top:425.5px" width="7.0" height="14" viewBox="0 0 7.0 14"><path d="M0.7 0.8L6.3 7.0L0.7 13.2" fill="none" stroke="#b8b8b8" stroke-width="1.5" stroke-linecap="round" stroke-linejoin="round"/></svg><svg style="left:1760.6px;top:421.1px;" width="22.799999999999997" height="22.799999999999997" viewBox="0 0 20 20"><path d="M2.7 3H17.3L10 17.4Z" fill="none" stroke="#c98850" stroke-width="3.7" stroke-linejoin="round"/></svg><div class="t " style="left:1791.5px;top:422px;color:#cdcdcd">立方体<span class="n">.005</span></div><svg style="left:1911.17px;top:421.37px;" width="21.659999999999997" height="21.659999999999997" viewBox="0 0 20 20"><path d="M1.4 15L8 8.4C7 5.2 9.2 1.8 13 1.4L11.6 5.6L14.4 8.4L18.6 7C18.2 10.8 14.8 13 11.6 12L5 18.6A2.55 2.55 0 0 1 1.4 15Z" fill="none" stroke="#6a8fdc" stroke-width="1.55" stroke-linejoin="round"/></svg><svg style="left:1939.6px;top:420.6px;" width="22.799999999999997" height="22.799999999999997" viewBox="0 0 20 20"><path d="M5.4 3.2H14.6M4.2 5.4L9 14.6M15.8 5.4L11 14.6" fill="none" stroke="#1bbf97" stroke-width="1.5"/><rect x="1.4" y="1.2" width="4" height="4" fill="none" stroke="#1bbf97" stroke-width="1.4"/><rect x="14.6" y="1.2" width="4" height="4" fill="none" stroke="#1bbf97" stroke-width="1.4"/><rect x="8" y="14.6" width="4" height="4" fill="none" stroke="#1bbf97" stroke-width="1.4"/></svg><svg style="left:2029.525px;top:422.025px;" width="19.95" height="19.95" viewBox="0 0 20 20"><path d="M0.6 10C4.2 3.6 15.8 3.6 19.4 10C15.8 16.4 4.2 16.4 0.6 10Z" fill="#ececec"/><circle cx="10" cy="10" r="4.5" fill="#2a2a2a"/><circle cx="10" cy="10" r="2.2" fill="#e4e4e4"/></svg><svg style="left:2057.955px;top:421.455px;" width="21.09" height="21.09" viewBox="0 0 20 20"><path d="M1 5.8H5.2L6.8 3H13.2L14.8 5.8H19V18H1Z" fill="#ececec"/><circle cx="10" cy="11.6" r="5.1" fill="#2a2a2a"/><circle cx="10" cy="11.6" r="3.3" fill="none" stroke="#ececec" stroke-width="1.4"/></svg><svg style="left:1739.0px;top:454.5px" width="7.0" height="14" viewBox="0 0 7.0 14"><path d="M0.7 0.8L6.3 7.0L0.7 13.2" fill="none" stroke="#b8b8b8" stroke-width="1.5" stroke-linecap="round" stroke-linejoin="round"/></svg><svg style="left:1760.6px;top:450.1px;" width="22.799999999999997" height="22.799999999999997" viewBox="0 0 20 20"><path d="M2.7 3H17.3L10 17.4Z" fill="none" stroke="#c98850" stroke-width="3.7" stroke-linejoin="round"/></svg><div class="t " style="left:1791.5px;top:451px;color:#cdcdcd">立方体<span class="n">.006</span></div><svg style="left:1911.17px;top:450.37px;" width="21.659999999999997" height="21.659999999999997" viewBox="0 0 20 20"><path d="M1.4 15L8 8.4C7 5.2 9.2 1.8 13 1.4L11.6 5.6L14.4 8.4L18.6 7C18.2 10.8 14.8 13 11.6 12L5 18.6A2.55 2.55 0 0 1 1.4 15Z" fill="none" stroke="#6a8fdc" stroke-width="1.55" stroke-linejoin="round"/></svg><svg style="left:1939.6px;top:449.6px;" width="22.799999999999997" height="22.799999999999997" viewBox="0 0 20 20"><path d="M5.4 3.2H14.6M4.2 5.4L9 14.6M15.8 5.4L11 14.6" fill="none" stroke="#1bbf97" stroke-width="1.5"/><rect x="1.4" y="1.2" width="4" height="4" fill="none" stroke="#1bbf97" stroke-width="1.4"/><rect x="14.6" y="1.2" width="4" height="4" fill="none" stroke="#1bbf97" stroke-width="1.4"/><rect x="8" y="14.6" width="4" height="4" fill="none" stroke="#1bbf97" stroke-width="1.4"/></svg><svg style="left:2029.525px;top:451.025px;" width="19.95" height="19.95" viewBox="0 0 20 20"><path d="M0.6 10C4.2 3.6 15.8 3.6 19.4 10C15.8 16.4 4.2 16.4 0.6 10Z" fill="#ececec"/><circle cx="10" cy="10" r="4.5" fill="#2a2a2a"/><circle cx="10" cy="10" r="2.2" fill="#e4e4e4"/></svg><svg style="left:2057.955px;top:450.455px;" width="21.09" height="21.09" viewBox="0 0 20 20"><path d="M1 5.8H5.2L6.8 3H13.2L14.8 5.8H19V18H1Z" fill="#ececec"/><circle cx="10" cy="11.6" r="5.1" fill="#2a2a2a"/><circle cx="10" cy="11.6" r="3.3" fill="none" stroke="#ececec" stroke-width="1.4"/></svg><svg style="left:1739.0px;top:483.5px" width="7.0" height="14" viewBox="0 0 7.0 14"><path d="M0.7 0.8L6.3 7.0L0.7 13.2" fill="none" stroke="#b8b8b8" stroke-width="1.5" stroke-linecap="round" stroke-linejoin="round"/></svg><svg style="left:1760.6px;top:479.1px;" width="22.799999999999997" height="22.799999999999997" viewBox="0 0 20 20"><path d="M2.7 3H17.3L10 17.4Z" fill="none" stroke="#c98850" stroke-width="3.7" stroke-linejoin="round"/></svg><div class="t " style="left:1791.5px;top:480px;color:#cdcdcd">立方体<span class="n">.007</span></div><svg style="left:1911.17px;top:479.37px;" width="21.659999999999997" height="21.659999999999997" viewBox="0 0 20 20"><path d="M1.4 15L8 8.4C7 5.2 9.2 1.8 13 1.4L11.6 5.6L14.4 8.4L18.6 7C18.2 10.8 14.8 13 11.6 12L5 18.6A2.55 2.55 0 0 1 1.4 15Z" fill="none" stroke="#6a8fdc" stroke-width="1.55" stroke-linejoin="round"/></svg><svg style="left:1939.6px;top:478.6px;" width="22.799999999999997" height="22.799999999999997" viewBox="0 0 20 20"><path d="M5.4 3.2H14.6M4.2 5.4L9 14.6M15.8 5.4L11 14.6" fill="none" stroke="#1bbf97" stroke-width="1.5"/><rect x="1.4" y="1.2" width="4" height="4" fill="none" stroke="#1bbf97" stroke-width="1.4"/><rect x="14.6" y="1.2" width="4" height="4" fill="none" stroke="#1bbf97" stroke-width="1.4"/><rect x="8" y="14.6" width="4" height="4" fill="none" stroke="#1bbf97" stroke-width="1.4"/></svg><svg style="left:2029.525px;top:480.025px;" width="19.95" height="19.95" viewBox="0 0 20 20"><path d="M0.6 10C4.2 3.6 15.8 3.6 19.4 10C15.8 16.4 4.2 16.4 0.6 10Z" fill="#ececec"/><circle cx="10" cy="10" r="4.5" fill="#2a2a2a"/><circle cx="10" cy="10" r="2.2" fill="#e4e4e4"/></svg><svg style="left:2057.955px;top:479.455px;" width="21.09" height="21.09" viewBox="0 0 20 20"><path d="M1 5.8H5.2L6.8 3H13.2L14.8 5.8H19V18H1Z" fill="#ececec"/><circle cx="10" cy="11.6" r="5.1" fill="#2a2a2a"/><circle cx="10" cy="11.6" r="3.3" fill="none" stroke="#ececec" stroke-width="1.4"/></svg><div class="a" style="left:1712px;top:145px;width:1px;height:350px;background:#4a4a4a;"></div><div class="a" style="left:2088px;top:304px;width:5px;height:98px;background:#3d3d3d;border-radius:3px"></div><div class="a" style="left:1670px;top:107px;width:427px;height:38px;background:#2e2e2e;box-shadow:0 1px 3px rgba(0,0,0,.35)"></div><div class="btn " style="left:1682px;top:111px;width:46px;height:28px;"></div><svg style="left:1686.03px;top:113.03px;" width="23.939999999999998" height="23.939999999999998" viewBox="0 0 20 20"><rect x="1.6" y="1.6" width="6.6" height="4.2" fill="#dcdcdc"/><path d="M4.6 6.4V15.6H9.4M4.6 10.2H9.4" fill="none" stroke="#dcdcdc" stroke-width="1.2" stroke-linecap="round" stroke-linejoin="round"/><rect x="9.6" y="8" width="8.8" height="3.8" fill="#dcdcdc"/><rect x="9.6" y="13.6" width="8.8" height="3.8" fill="#dcdcdc"/></svg><svg style="left:1713.0px;top:124.5px" width="10" height="5.0" viewBox="0 0 10 5.0"><path d="M0.8 0.6L5.0 4.4L9.2 0.6" fill="none" stroke="#e0e0e0" stroke-width="1.5" stroke-linecap="round" stroke-linejoin="round"/></svg><div class="btn " style="left:1735px;top:111px;width:46px;height:28px;"></div><svg style="left:1740.03px;top:113.03px;" width="23.939999999999998" height="23.939999999999998" viewBox="0 0 20 20"><path d="M7 2.2H18V13.2H7Z" fill="none" stroke="#dcdcdc" stroke-width="1.5" stroke-linecap="round" stroke-linejoin="round"/><path d="M7.5 12.8L11.4 6.2L14 10.4L15.3 8.6L17.6 12.8Z" fill="#dcdcdc"/><circle cx="15.4" cy="5" r="1.1" fill="#dcdcdc"/><path d="M4.6 5V15.8H15M2.2 7.6V18.2H12.6" fill="none" stroke="#dcdcdc" stroke-width="1.2" stroke-linecap="round" stroke-linejoin="round"/></svg><svg style="left:1766.0px;top:124.5px" width="10" height="5.0" viewBox="0 0 10 5.0"><path d="M0.8 0.6L5.0 4.4L9.2 0.6" fill="none" stroke="#e0e0e0" stroke-width="1.5" stroke-linecap="round" stroke-linejoin="round"/></svg><div class="btn " style="left:1803px;top:111px;width:174px;height:28px;background:#1d1d1d;border-color:#3a3a3a"></div><svg style="left:1809.03px;top:113.53px;" width="23.939999999999998" height="23.939999999999998" viewBox="0 0 20 20"><circle cx="8" cy="8" r="5.6" fill="none" stroke="#e6e6e6" stroke-width="1.5" stroke-linecap="round" stroke-linejoin="round"/><path d="M12.2 12.2L18 18" fill="none" stroke="#e6e6e6" stroke-width="1.5" stroke-linecap="round" stroke-linejoin="round"/></svg><div class="t " style="left:1841px;top:113px;color:#6e6e6e">搜索</div><div class="btn " style="left:2003px;top:111px;width:46px;height:28px;"></div><svg style="left:2007.03px;top:113.53px;" width="23.939999999999998" height="23.939999999999998" viewBox="0 0 20 20"><path d="M2 2.4H18L12 9.8V15.6L8 18V9.8Z" fill="none" stroke="#f0f0f0" stroke-width="1.5" stroke-linecap="round" stroke-linejoin="round"/></svg><svg style="left:2034.0px;top:124.5px" width="10" height="5.0" viewBox="0 0 10 5.0"><path d="M0.8 0.6L5.0 4.4L9.2 0.6" fill="none" stroke="#e0e0e0" stroke-width="1.5" stroke-linecap="round" stroke-linejoin="round"/></svg><div class="btn lt" style="left:2056px;top:111px;width:28px;height:28px;"></div><svg style="left:2058.03px;top:113.03px;" width="23.939999999999998" height="23.939999999999998" viewBox="0 0 20 20"><path d="M2.4 5.2V2.6H10M3.4 5.6V17.4H15.2V9.4" fill="none" stroke="#bdbdbd" stroke-width="1.3"/><rect x="6.6" y="9.4" width="5" height="2" rx="1" fill="#bdbdbd"/><circle cx="15.2" cy="4.6" r="4.2" fill="#f2f2f2"/><path d="M15.2 2V7.2M12.6 4.6H17.8" stroke="#545454" stroke-width="1.3"/></svg></div></div>
<div class="a" style="left:1670px;top:500px;width:427px;height:803px;border-radius:8px;overflow:hidden"><div class="a" style="left:-1670px;top:-500px;width:2108px;height:1332px"><div class="a" style="left:1670px;top:538px;width:43px;height:770px;background:#1b1b1b;"></div><div class="a" style="left:1675px;top:549px;width:38px;height:38.4px;background:#222222;border-radius:6px 0 0 6px"></div><div class="a" style="left:1675px;top:601px;width:38px;height:38.4px;background:#222222;border-radius:6px 0 0 6px"></div><div class="a" style="left:1675px;top:641px;width:38px;height:38.4px;background:#222222;border-radius:6px 0 0 6px"></div><div class="a" style="left:1675px;top:681px;width:38px;height:38.4px;background:#222222;border-radius:6px 0 0 6px"></div><div class="a" style="left:1675px;top:721px;width:38px;height:38.4px;background:#222222;border-radius:6px 0 0 6px"></div><div class="a" style="left:1675px;top:761px;width:38px;height:38.4px;background:#222222;border-radius:6px 0 0 6px"></div><div class="a" style="left:1675px;top:814px;width:38px;height:38.4px;background:#303030;border-radius:6px 0 0 6px"></div><div class="a" style="left:1675px;top:854px;width:38px;height:38.4px;background:#222222;border-radius:6px 0 0 6px"></div><div class="a" style="left:1675px;top:894px;width:38px;height:38.4px;background:#222222;border-radius:6px 0 0 6px"></div><div class="a" style="left:1675px;top:934px;width:38px;height:38.4px;background:#222222;border-radius:6px 0 0 6px"></div><div class="a" style="left:1675px;top:974px;width:38px;height:38.4px;background:#222222;border-radius:6px 0 0 6px"></div><div class="a" style="left:1675px;top:1014px;width:38px;height:38.4px;background:#222222;border-radius:6px 0 0 6px"></div><div class="a" style="left:1675px;top:1054px;width:38px;height:38.4px;background:#222222;border-radius:6px 0 0 6px"></div><svg style="left:1682.315px;top:556.315px;" width="23.369999999999997" height="23.369999999999997" viewBox="0 0 20 20"><path d="M4.8 1.8V9.4" stroke="#c8c8c8" stroke-width="1.5" fill="none"/><path d="M2.4 10.2H7.2L7.4 14.4C7.4 17 6.4 18.2 4.8 18.2S2.2 17 2.2 14.4Z" fill="#c8c8c8"/><path d="M11.6 2V5.6Q11.6 7.8 13.6 8.6V16.8A1.1 1.1 0 0 0 15.8 16.8V8.6Q17.8 7.8 17.8 5.6V2" fill="none" stroke="#c8c8c8" stroke-width="2.1" stroke-linejoin="round"/></svg><svg style="left:1682.315px;top:608.315px;" width="23.369999999999997" height="23.369999999999997" viewBox="0 0 20 20"><path d="M1.6 5.4H5.2L6.4 3H11.2L12.4 5.4H18.4V17.8H1.6Z" fill="#c8c8c8"/><rect x="14.4" y="2.9" width="2.8" height="1.3" fill="#c8c8c8"/><rect x="3.4" y="7.4" width="9.8" height="8.4" fill="#262626"/><path d="M4.2 9.4H12.4M4.2 11.6H12.4M4.2 13.8H12.4" stroke="#a0a0a0" stroke-width="1.1"/><circle cx="15.8" cy="9.2" r="1.15" fill="#262626"/><circle cx="15.8" cy="13.8" r="1.15" fill="#262626"/></svg><svg style="left:1682.315px;top:648.315px;" width="23.369999999999997" height="23.369999999999997" viewBox="0 0 20 20"><path d="M1.6 9.2V4.4A2.6 2.6 0 0 1 4.2 1.8H15.8A2.6 2.6 0 0 1 18.4 4.4V9.2H15.2V6.6H4.8V9.2Z" fill="#c8c8c8"/><rect x="5" y="7.6" width="10" height="10.8" fill="#9c9c9c"/><path d="M6.4 17L9.8 11.6L13.4 17Z" fill="#262626"/><circle cx="12.9" cy="10.2" r=".9" fill="#e0e0e0"/></svg><svg style="left:1682.315px;top:688.315px;" width="23.369999999999997" height="23.369999999999997" viewBox="0 0 20 20"><path d="M7 2.2H18V13.2H7Z" fill="none" stroke="#c8c8c8" stroke-width="1.5"/><path d="M7.5 12.8L11.4 6.2L14 10.4L15.3 8.6L17.6 12.8Z" fill="#c8c8c8"/><circle cx="15.4" cy="5" r="1.1" fill="#c8c8c8"/><path d="M4.6 5V15.8H15M2.2 7.6V18.2H12.6" fill="none" stroke="#c8c8c8" stroke-width="1.2"/></svg><svg style="left:1682.315px;top:728.315px;" width="23.369999999999997" height="23.369999999999997" viewBox="0 0 20 20"><path d="M5.6 1.6Q6.2 1.6 6.6 2.6L9.4 8.2Q7 10.4 7.6 13.4Q4.6 14.6 1.8 12.8Q1.4 12.2 1.8 11.4L4.6 2.6Q5 1.6 5.6 1.6Z" fill="#c8c8c8"/><circle cx="12.6" cy="3.6" r="2.1" fill="#c8c8c8"/><circle cx="11.6" cy="14.2" r="3.9" fill="none" stroke="#c8c8c8" stroke-width="1.5"/><path d="M9.6 13.8A2.2 2.2 0 0 1 11.4 12" fill="none" stroke="#c8c8c8" stroke-width="1.1"/></svg><svg style="left:1682.315px;top:768.315px;" width="23.369999999999997" height="23.369999999999997" viewBox="0 0 20 20"><circle cx="10" cy="10.4" r="7.4" fill="none" stroke="#c9656f" stroke-width="1.7"/><path d="M7 4.4L10.6 5.4L11 8.2L8.4 9.6L6.4 8.4L4.6 9ZM8.6 11.6L12.4 12.2L13 14.4L10.6 17L9 14.6Z" fill="#c9656f"/><path d="M15.6 4.6L18.2 2M2 18.4L4.6 15.8" stroke="#c9656f" stroke-width="1.4" fill="none"/></svg><svg style="left:1682.315px;top:821.315px;" width="23.369999999999997" height="23.369999999999997" viewBox="0 0 20 20"><rect x="5" y="5" width="10" height="10" fill="#e9964b"/><path d="M1.4 5.4V1.4H5.4M14.6 1.4H18.6V5.4M18.6 14.6V18.6H14.6M5.4 18.6H1.4V14.6" fill="none" stroke="#c07a3c" stroke-width="1.2"/></svg><svg style="left:1682.315px;top:861.315px;" width="23.369999999999997" height="23.369999999999997" viewBox="0 0 20 20"><path d="M1.4 15L8 8.4C7 5.2 9.2 1.8 13 1.4L11.6 5.6L14.4 8.4L18.6 7C18.2 10.8 14.8 13 11.6 12L5 18.6A2.55 2.55 0 0 1 1.4 15Z" fill="#5b84d6" stroke="#5b84d6" stroke-width="1.2" stroke-linejoin="round"/></svg><svg style="left:1682.315px;top:901.315px;" width="23.369999999999997" height="23.369999999999997" viewBox="0 0 20 20"><circle cx="4" cy="4.4" r="3" fill="#5b84d6"/><circle cx="16.4" cy="4.4" r="1.7" fill="#5b84d6"/><circle cx="16.2" cy="16" r="2.1" fill="#5b84d6"/><circle cx="3.8" cy="16.6" r="1.6" fill="#5b84d6"/><path d="M4 4.4H16.4M4 4.4L16.2 16M4 4.4L3.8 16.6" stroke="#5b84d6" stroke-width="1.2"/></svg><svg style="left:1682.315px;top:941.315px;" width="23.369999999999997" height="23.369999999999997" viewBox="0 0 20 20"><circle cx="9" cy="10.6" r="3.4" fill="#5b84d6"/><circle cx="15.8" cy="3.8" r="2.1" fill="#5b84d6"/><path d="M12.4 3.4A7.6 7.6 0 1 0 16.6 14" fill="none" stroke="#5b84d6" stroke-width="1.5" stroke-linecap="round"/></svg><svg style="left:1682.315px;top:981.315px;" width="23.369999999999997" height="23.369999999999997" viewBox="0 0 20 20"><path d="M12.4 2.4L16.4 1.6Q18.8 2.6 18.4 5.4L15.4 13.2A7 7 0 1 1 5.4 6.6Z" fill="none" stroke="#5b84d6" stroke-width="1.6" stroke-linejoin="round"/><circle cx="8" cy="12.6" r="3.9" fill="none" stroke="#5b84d6" stroke-width="1.5"/><circle cx="8" cy="12.6" r="1.5" fill="#5b84d6"/></svg><svg style="left:1682.315px;top:1021.315px;" width="23.369999999999997" height="23.369999999999997" viewBox="0 0 20 20"><path d="M5.4 3.2H14.6M4.2 5.4L9 14.6M15.8 5.4L11 14.6" fill="none" stroke="#1bbf97" stroke-width="1.7"/><rect x="1.4" y="1.2" width="4" height="4" fill="none" stroke="#1bbf97" stroke-width="1.5"/><rect x="14.6" y="1.2" width="4" height="4" fill="none" stroke="#1bbf97" stroke-width="1.5"/><rect x="8" y="14.6" width="4" height="4" fill="none" stroke="#1bbf97" stroke-width="1.5"/></svg><svg style="left:1682.315px;top:1061.315px;" width="23.369999999999997" height="23.369999999999997" viewBox="0 0 20 20"><circle cx="10" cy="10" r="7.8" fill="none" stroke="#c9656f" stroke-width="1.6"/><path d="M10 2.2A7.8 7.8 0 0 1 17.8 10Q13.9 12.4 10 12.4Z" fill="#c9656f"/><path d="M2.2 10Q6.1 12.4 10 12.4V17.8A7.8 7.8 0 0 1 2.2 10Z" fill="#c9656f"/></svg><svg style="left:1686.0px;top:1123.5px" width="10" height="5.0" viewBox="0 0 10 5.0"><path d="M0.8 0.6L5.0 4.4L9.2 0.6" fill="none" stroke="#5a5a5a" stroke-width="1.5" stroke-linecap="round" stroke-linejoin="round"/></svg><div class="a" style="left:1670px;top:500px;width:427px;height:38px;background:#303030;"></div><div class="btn " style="left:1682px;top:504px;width:46px;height:28px;"></div><svg style="left:1686.6px;top:506.6px;" width="22.799999999999997" height="22.799999999999997" viewBox="0 0 20 20"><rect x="1.4" y="2" width="17.2" height="7" rx="3.5" fill="#e8e8e8"/><path d="M10.4 3.5H15A2 2 0 0 1 15 7.5H10.4Z" fill="#2a2a2a"/><rect x="1.4" y="11" width="17.2" height="7" rx="3.5" fill="#e8e8e8"/><path d="M12.8 12.5H15A2 2 0 0 1 15 16.5H12.8Z" fill="#2a2a2a"/></svg><svg style="left:1713.0px;top:517.5px" width="10" height="5.0" viewBox="0 0 10 5.0"><path d="M0.8 0.6L5.0 4.4L9.2 0.6" fill="none" stroke="#e0e0e0" stroke-width="1.5" stroke-linecap="round" stroke-linejoin="round"/></svg><div class="btn " style="left:1793px;top:504px;width:173px;height:28px;background:#1d1d1d;border-color:#3a3a3a"></div><svg style="left:1798.6px;top:507.1px;" width="22.799999999999997" height="22.799999999999997" viewBox="0 0 20 20"><circle cx="8" cy="8" r="5.6" fill="none" stroke="#e6e6e6" stroke-width="1.5" stroke-linecap="round" stroke-linejoin="round"/><path d="M12.2 12.2L18 18" fill="none" stroke="#e6e6e6" stroke-width="1.5" stroke-linecap="round" stroke-linejoin="round"/></svg><div class="t " style="left:1830px;top:506px;color:#6e6e6e">搜索</div><div class="btn " style="left:2056px;top:504px;width:29px;height:28px;"></div><svg style="left:2065.5px;top:517.5px" width="10" height="5.0" viewBox="0 0 10 5.0"><path d="M0.8 0.6L5.0 4.4L9.2 0.6" fill="none" stroke="#e0e0e0" stroke-width="1.5" stroke-linecap="round" stroke-linejoin="round"/></svg><div class="a" style="left:2089px;top:540px;width:5px;height:612px;background:#3a3a3a;border-radius:3px"></div><svg style="left:1727.885px;top:551.885px;" width="22.229999999999997" height="22.229999999999997" viewBox="0 0 20 20"><rect x="5.2" y="5.2" width="9.6" height="9.6" fill="#dcdcdc"/><path d="M1.5 5.5V1.5H5.5M14.5 1.5H18.5V5.5M18.5 14.5V18.5H14.5M5.5 18.5H1.5V14.5" fill="none" stroke="#dcdcdc" stroke-width="1.2" stroke-linecap="round" stroke-linejoin="round"/></svg><div class="t w" style="left:1764px;top:551px;">柱体<span class="n">.012</span></div><svg style="left:2058.6px;top:551.6px;" width="22.799999999999997" height="22.799999999999997" viewBox="0 0 20 20"><path d="M12.2 2.2L17.8 7.8L16 8.6L13.4 11.2L13.4 14.6L5.4 6.6L8.8 6.6L11.4 4Z" fill="none" stroke="#9a9a9a" stroke-width="1.2" stroke-linecap="round" stroke-linejoin="round"/><path d="M9.2 10.8L2.6 17.4" fill="none" stroke="#9a9a9a" stroke-width="1.2" stroke-linecap="round" stroke-linejoin="round"/></svg><div class="btn " style="left:1725px;top:602px;width:360px;height:29px;background:#1d1d1d;border-color:#3a3a3a"></div><div class="a" style="left:1726px;top:603px;width:44px;height:27px;background:#282828;border-radius:4px 0 0 4px"></div><div class="a" style="left:1770px;top:603px;width:1px;height:27px;background:#3a3a3a;"></div><svg style="left:1730.885px;top:605.385px;" width="22.229999999999997" height="22.229999999999997" viewBox="0 0 20 20"><rect x="5.2" y="5.2" width="9.6" height="9.6" fill="#dcdcdc"/><path d="M1.5 5.5V1.5H5.5M14.5 1.5H18.5V5.5M18.5 14.5V18.5H14.5M5.5 18.5H1.5V14.5" fill="none" stroke="#dcdcdc" stroke-width="1.2" stroke-linecap="round" stroke-linejoin="round"/></svg><svg style="left:1756.0px;top:615.5px" width="10" height="5.0" viewBox="0 0 10 5.0"><path d="M0.8 0.6L5.0 4.4L9.2 0.6" fill="none" stroke="#e0e0e0" stroke-width="1.5" stroke-linecap="round" stroke-linejoin="round"/></svg><div class="t w" style="left:1782px;top:605px;">柱体<span class="n">.012</span></div><div class="a" style="left:1724px;top:645px;width:360px;height:406px;background:#3d3d3d;border-radius:6px;box-sizing:border-box;border:1px solid #484848"></div><svg style="left:1737.5px;top:659.75px" width="13" height="6.5" viewBox="0 0 13 6.5"><path d="M0.8 0.6L6.5 5.9L12.2 0.6" fill="none" stroke="#d0d0d0" stroke-width="1.5" stroke-linecap="round" stroke-linejoin="round"/></svg><div class="t w" style="left:1755.5px;top:652px;">变换</div><svg style="left:2054.5px;top:660px" width="18" height="8" viewBox="0 0 18 8"><rect x="0" y="0" width="1.5" height="1.5" fill="#8c8c8c"/><rect x="0" y="5" width="1.5" height="1.5" fill="#8c8c8c"/><rect x="5" y="0" width="1.5" height="1.5" fill="#8c8c8c"/><rect x="5" y="5" width="1.5" height="1.5" fill="#8c8c8c"/><rect x="10" y="0" width="1.5" height="1.5" fill="#8c8c8c"/><rect x="10" y="5" width="1.5" height="1.5" fill="#8c8c8c"/><rect x="15" y="0" width="1.5" height="1.5" fill="#8c8c8c"/><rect x="15" y="5" width="1.5" height="1.5" fill="#8c8c8c"/></svg><div class="a" style="left:1867px;top:694.2px;width:146px;height:27.3px;background:#545454;border-radius:5px 0 0 0"></div><div class="t w" style="right:254.5px;top:695px;">位置 X</div><div class="t w d" style="left:1867.0px;width:146px;text-align:center;top:696px;word-spacing:-1px"><span style="letter-spacing:2px">-</span>0.47225 m</div><svg style="left:2017.385px;top:696.085px;" width="22.229999999999997" height="22.229999999999997" viewBox="0 0 20 20"><rect x="4" y="9.6" width="12" height="8.4" rx="1" fill="none" stroke="#a6a6a6" stroke-width="1.4"/><path d="M12.6 9.4V5.6A3.2 3.2 0 0 0 6.2 5.2" fill="none" stroke="#a6a6a6" stroke-width="1.4" stroke-linecap="round"/><path d="M10 12.6V15" stroke="#a6a6a6" stroke-width="1.6"/></svg><div class="a" style="left:2054.5px;top:705.2px;width:6px;height:6px;border-radius:50%;background:#e0e0e0"></div><div class="a" style="left:1867px;top:722.7px;width:146px;height:27.3px;background:#545454;border-radius:0"></div><div class="t w" style="right:254.5px;top:723px;">Y</div><div class="t w d" style="left:1867.0px;width:146px;text-align:center;top:725px;word-spacing:-1px">1.3149 m</div><svg style="left:2017.385px;top:724.585px;" width="22.229999999999997" height="22.229999999999997" viewBox="0 0 20 20"><rect x="4" y="9.6" width="12" height="8.4" rx="1" fill="none" stroke="#a6a6a6" stroke-width="1.4"/><path d="M12.6 9.4V5.6A3.2 3.2 0 0 0 6.2 5.2" fill="none" stroke="#a6a6a6" stroke-width="1.4" stroke-linecap="round"/><path d="M10 12.6V15" stroke="#a6a6a6" stroke-width="1.6"/></svg><div class="a" style="left:2054.5px;top:733.7px;width:6px;height:6px;border-radius:50%;background:#e0e0e0"></div><div class="a" style="left:1867px;top:751.2px;width:146px;height:27.3px;background:#545454;border-radius:0 0 0 5px"></div><div class="t w" style="right:254.5px;top:752px;">Z</div><div class="t w d" style="left:1867.0px;width:146px;text-align:center;top:753px;word-spacing:-1px">1.412 m</div><svg style="left:2017.385px;top:753.085px;" width="22.229999999999997" height="22.229999999999997" viewBox="0 0 20 20"><rect x="4" y="9.6" width="12" height="8.4" rx="1" fill="none" stroke="#a6a6a6" stroke-width="1.4"/><path d="M12.6 9.4V5.6A3.2 3.2 0 0 0 6.2 5.2" fill="none" stroke="#a6a6a6" stroke-width="1.4" stroke-linecap="round"/><path d="M10 12.6V15" stroke="#a6a6a6" stroke-width="1.6"/></svg><div class="a" style="left:2054.5px;top:762.2px;width:6px;height:6px;border-radius:50%;background:#e0e0e0"></div><div class="a" style="left:1867px;top:788px;width:146px;height:27.3px;background:#545454;border-radius:5px 0 0 0"></div><div class="t w" style="right:254.5px;top:789px;">旋转 X</div><div class="t w d" style="left:1867.0px;width:146px;text-align:center;top:790px;word-spacing:-1px">0°</div><svg style="left:2017.385px;top:789.885px;" width="22.229999999999997" height="22.229999999999997" viewBox="0 0 20 20"><rect x="4" y="9.6" width="12" height="8.4" rx="1" fill="none" stroke="#a6a6a6" stroke-width="1.4"/><path d="M12.6 9.4V5.6A3.2 3.2 0 0 0 6.2 5.2" fill="none" stroke="#a6a6a6" stroke-width="1.4" stroke-linecap="round"/><path d="M10 12.6V15" stroke="#a6a6a6" stroke-width="1.6"/></svg><div class="a" style="left:2054.5px;top:799px;width:6px;height:6px;border-radius:50%;background:#e0e0e0"></div><div class="a" style="left:1867px;top:816.5px;width:146px;height:27.3px;background:#545454;border-radius:0"></div><div class="t w" style="right:254.5px;top:817px;">Y</div><div class="t w d" style="left:1867.0px;width:146px;text-align:center;top:818px;word-spacing:-1px">0°</div><svg style="left:2017.385px;top:818.385px;" width="22.229999999999997" height="22.229999999999997" viewBox="0 0 20 20"><rect x="4" y="9.6" width="12" height="8.4" rx="1" fill="none" stroke="#a6a6a6" stroke-width="1.4"/><path d="M12.6 9.4V5.6A3.2 3.2 0 0 0 6.2 5.2" fill="none" stroke="#a6a6a6" stroke-width="1.4" stroke-linecap="round"/><path d="M10 12.6V15" stroke="#a6a6a6" stroke-width="1.6"/></svg><div class="a" style="left:2054.5px;top:827.5px;width:6px;height:6px;border-radius:50%;background:#e0e0e0"></div><div class="a" style="left:1867px;top:845px;width:146px;height:27.3px;background:#545454;border-radius:0 0 0 5px"></div><div class="t w" style="right:254.5px;top:846px;">Z</div><div class="t w d" style="left:1867.0px;width:146px;text-align:center;top:847px;word-spacing:-1px">0°</div><svg style="left:2017.385px;top:846.885px;" width="22.229999999999997" height="22.229999999999997" viewBox="0 0 20 20"><rect x="4" y="9.6" width="12" height="8.4" rx="1" fill="none" stroke="#a6a6a6" stroke-width="1.4"/><path d="M12.6 9.4V5.6A3.2 3.2 0 0 0 6.2 5.2" fill="none" stroke="#a6a6a6" stroke-width="1.4" stroke-linecap="round"/><path d="M10 12.6V15" stroke="#a6a6a6" stroke-width="1.6"/></svg><div class="a" style="left:2054.5px;top:856px;width:6px;height:6px;border-radius:50%;background:#e0e0e0"></div><div class="t w" style="right:254.5px;top:883px;">模式</div><div class="btn " style="left:1867px;top:882px;width:146px;height:27px;background:#1f1f1f;border-color:#1f1f1f"></div><div class="t w" style="left:1878px;top:884px;"><span style="letter-spacing:.6px">XYZ</span> 欧拉</div><svg style="left:1998.0px;top:894.5px" width="10" height="5.0" viewBox="0 0 10 5.0"><path d="M0.8 0.6L5.0 4.4L9.2 0.6" fill="none" stroke="#e0e0e0" stroke-width="1.5" stroke-linecap="round" stroke-linejoin="round"/></svg><div class="a" style="left:2054.5px;top:893px;width:6px;height:6px;border-radius:50%;background:#e0e0e0"></div><div class="a" style="left:1867px;top:918.2px;width:146px;height:27.3px;background:#545454;border-radius:5px 0 0 0"></div><div class="t w" style="right:254.5px;top:919px;">缩放 X</div><div class="t w d" style="left:1867.0px;width:146px;text-align:center;top:920px;word-spacing:-1px">1.000</div><svg style="left:2017.385px;top:920.085px;" width="22.229999999999997" height="22.229999999999997" viewBox="0 0 20 20"><rect x="4" y="9.6" width="12" height="8.4" rx="1" fill="none" stroke="#a6a6a6" stroke-width="1.4"/><path d="M12.6 9.4V5.6A3.2 3.2 0 0 0 6.2 5.2" fill="none" stroke="#a6a6a6" stroke-width="1.4" stroke-linecap="round"/><path d="M10 12.6V15" stroke="#a6a6a6" stroke-width="1.6"/></svg><div class="a" style="left:2054.5px;top:929.2px;width:6px;height:6px;border-radius:50%;background:#e0e0e0"></div><div class="a" style="left:1867px;top:946.7px;width:146px;height:27.3px;background:#545454;border-radius:0"></div><div class="t w" style="right:254.5px;top:947px;">Y</div><div class="t w d" style="left:1867.0px;width:146px;text-align:center;top:949px;word-spacing:-1px">1.000</div><svg style="left:2017.385px;top:948.585px;" width="22.229999999999997" height="22.229999999999997" viewBox="0 0 20 20"><rect x="4" y="9.6" width="12" height="8.4" rx="1" fill="none" stroke="#a6a6a6" stroke-width="1.4"/><path d="M12.6 9.4V5.6A3.2 3.2 0 0 0 6.2 5.2" fill="none" stroke="#a6a6a6" stroke-width="1.4" stroke-linecap="round"/><path d="M10 12.6V15" stroke="#a6a6a6" stroke-width="1.6"/></svg><div class="a" style="left:2054.5px;top:957.7px;width:6px;height:6px;border-radius:50%;background:#e0e0e0"></div><div class="a" style="left:1867px;top:975.2px;width:146px;height:27.3px;background:#545454;border-radius:0 0 0 5px"></div><div class="t w" style="right:254.5px;top:976px;">Z</div><div class="t w d" style="left:1867.0px;width:146px;text-align:center;top:977px;word-spacing:-1px">1.000</div><svg style="left:2017.385px;top:977.085px;" width="22.229999999999997" height="22.229999999999997" viewBox="0 0 20 20"><rect x="4" y="9.6" width="12" height="8.4" rx="1" fill="none" stroke="#a6a6a6" stroke-width="1.4"/><path d="M12.6 9.4V5.6A3.2 3.2 0 0 0 6.2 5.2" fill="none" stroke="#a6a6a6" stroke-width="1.4" stroke-linecap="round"/><path d="M10 12.6V15" stroke="#a6a6a6" stroke-width="1.6"/></svg><div class="a" style="left:2054.5px;top:986.2px;width:6px;height:6px;border-radius:50%;background:#e0e0e0"></div><svg style="left:1760.0px;top:1027.0px" width="7.0" height="14" viewBox="0 0 7.0 14"><path d="M0.7 0.8L6.3 7.0L0.7 13.2" fill="none" stroke="#d0d0d0" stroke-width="1.5" stroke-linecap="round" stroke-linejoin="round"/></svg><div class="t w" style="left:1775.5px;top:1023px;">增量变换</div><div class="a" style="left:1724px;top:1055px;width:360px;height:35px;background:#3d3d3d;border-radius:6px;box-sizing:border-box;border:1px solid #484848"></div><svg style="left:1740.0px;top:1065.0px" width="7.0" height="14" viewBox="0 0 7.0 14"><path d="M0.7 0.8L6.3 7.0L0.7 13.2" fill="none" stroke="#d0d0d0" stroke-width="1.5" stroke-linecap="round" stroke-linejoin="round"/></svg><div class="t w" style="left:1755.5px;top:1061px;">关系</div><svg style="left:2054.5px;top:1069px" width="18" height="8" viewBox="0 0 18 8"><rect x="0" y="0" width="1.5" height="1.5" fill="#8c8c8c"/><rect x="0" y="5" width="1.5" height="1.5" fill="#8c8c8c"/><rect x="5" y="0" width="1.5" height="1.5" fill="#8c8c8c"/><rect x="5" y="5" width="1.5" height="1.5" fill="#8c8c8c"/><rect x="10" y="0" width="1.5" height="1.5" fill="#8c8c8c"/><rect x="10" y="5" width="1.5" height="1.5" fill="#8c8c8c"/><rect x="15" y="0" width="1.5" height="1.5" fill="#8c8c8c"/><rect x="15" y="5" width="1.5" height="1.5" fill="#8c8c8c"/></svg><div class="a" style="left:1724px;top:1093px;width:360px;height:35px;background:#3d3d3d;border-radius:6px;box-sizing:border-box;border:1px solid #484848"></div><svg style="left:1740.0px;top:1103.0px" width="7.0" height="14" viewBox="0 0 7.0 14"><path d="M0.7 0.8L6.3 7.0L0.7 13.2" fill="none" stroke="#d0d0d0" stroke-width="1.5" stroke-linecap="round" stroke-linejoin="round"/></svg><div class="t w" style="left:1755.5px;top:1099px;">集合</div><svg style="left:2054.5px;top:1107px" width="18" height="8" viewBox="0 0 18 8"><rect x="0" y="0" width="1.5" height="1.5" fill="#8c8c8c"/><rect x="0" y="5" width="1.5" height="1.5" fill="#8c8c8c"/><rect x="5" y="0" width="1.5" height="1.5" fill="#8c8c8c"/><rect x="5" y="5" width="1.5" height="1.5" fill="#8c8c8c"/><rect x="10" y="0" width="1.5" height="1.5" fill="#8c8c8c"/><rect x="10" y="5" width="1.5" height="1.5" fill="#8c8c8c"/><rect x="15" y="0" width="1.5" height="1.5" fill="#8c8c8c"/><rect x="15" y="5" width="1.5" height="1.5" fill="#8c8c8c"/></svg><div class="a" style="left:1724px;top:1131px;width:360px;height:35px;background:#3d3d3d;border-radius:6px;box-sizing:border-box;border:1px solid #484848"></div><svg style="left:1740.0px;top:1141.0px" width="7.0" height="14" viewBox="0 0 7.0 14"><path d="M0.7 0.8L6.3 7.0L0.7 13.2" fill="none" stroke="#d0d0d0" stroke-width="1.5" stroke-linecap="round" stroke-linejoin="round"/></svg><div class="t w" style="left:1755.5px;top:1137px;">实例化</div><svg style="left:2054.5px;top:1145px" width="18" height="8" viewBox="0 0 18 8"><rect x="0" y="0" width="1.5" height="1.5" fill="#8c8c8c"/><rect x="0" y="5" width="1.5" height="1.5" fill="#8c8c8c"/><rect x="5" y="0" width="1.5" height="1.5" fill="#8c8c8c"/><rect x="5" y="5" width="1.5" height="1.5" fill="#8c8c8c"/><rect x="10" y="0" width="1.5" height="1.5" fill="#8c8c8c"/><rect x="10" y="5" width="1.5" height="1.5" fill="#8c8c8c"/><rect x="15" y="0" width="1.5" height="1.5" fill="#8c8c8c"/><rect x="15" y="5" width="1.5" height="1.5" fill="#8c8c8c"/></svg><div class="a" style="left:1724px;top:1169px;width:360px;height:35px;background:#3d3d3d;border-radius:6px;box-sizing:border-box;border:1px solid #484848"></div><svg style="left:1740.0px;top:1179.0px" width="7.0" height="14" viewBox="0 0 7.0 14"><path d="M0.7 0.8L6.3 7.0L0.7 13.2" fill="none" stroke="#d0d0d0" stroke-width="1.5" stroke-linecap="round" stroke-linejoin="round"/></svg><div class="t w" style="left:1755.5px;top:1175px;">运动路径</div><svg style="left:2054.5px;top:1183px" width="18" height="8" viewBox="0 0 18 8"><rect x="0" y="0" width="1.5" height="1.5" fill="#8c8c8c"/><rect x="0" y="5" width="1.5" height="1.5" fill="#8c8c8c"/><rect x="5" y="0" width="1.5" height="1.5" fill="#8c8c8c"/><rect x="5" y="5" width="1.5" height="1.5" fill="#8c8c8c"/><rect x="10" y="0" width="1.5" height="1.5" fill="#8c8c8c"/><rect x="10" y="5" width="1.5" height="1.5" fill="#8c8c8c"/><rect x="15" y="0" width="1.5" height="1.5" fill="#8c8c8c"/><rect x="15" y="5" width="1.5" height="1.5" fill="#8c8c8c"/></svg><div class="a" style="left:1724px;top:1207px;width:360px;height:35px;background:#3d3d3d;border-radius:6px;box-sizing:border-box;border:1px solid #484848"></div><svg style="left:1740.0px;top:1217.0px" width="7.0" height="14" viewBox="0 0 7.0 14"><path d="M0.7 0.8L6.3 7.0L0.7 13.2" fill="none" stroke="#d0d0d0" stroke-width="1.5" stroke-linecap="round" stroke-linejoin="round"/></svg><div class="t w" style="left:1755.5px;top:1213px;">着色方式</div><svg style="left:2054.5px;top:1221px" width="18" height="8" viewBox="0 0 18 8"><rect x="0" y="0" width="1.5" height="1.5" fill="#8c8c8c"/><rect x="0" y="5" width="1.5" height="1.5" fill="#8c8c8c"/><rect x="5" y="0" width="1.5" height="1.5" fill="#8c8c8c"/><rect x="5" y="5" width="1.5" height="1.5" fill="#8c8c8c"/><rect x="10" y="0" width="1.5" height="1.5" fill="#8c8c8c"/><rect x="10" y="5" width="1.5" height="1.5" fill="#8c8c8c"/><rect x="15" y="0" width="1.5" height="1.5" fill="#8c8c8c"/><rect x="15" y="5" width="1.5" height="1.5" fill="#8c8c8c"/></svg><div class="a" style="left:1724px;top:1245px;width:360px;height:35px;background:#3d3d3d;border-radius:6px;box-sizing:border-box;border:1px solid #484848"></div><svg style="left:1740.0px;top:1255.0px" width="7.0" height="14" viewBox="0 0 7.0 14"><path d="M0.7 0.8L6.3 7.0L0.7 13.2" fill="none" stroke="#d0d0d0" stroke-width="1.5" stroke-linecap="round" stroke-linejoin="round"/></svg><div class="a" style="left:1754.5px;top:1253.5px;width:18px;height:18px;background:#3c527c;border-radius:4px"></div><svg style="left:1757px;top:1257px" width="13" height="11" viewBox="0 0 13 11"><path d="M1.5 5.5L5 9L11.5 1.5" fill="none" stroke="#7283a8" stroke-width="1.6"/></svg><div class="t w" style="left:1777.5px;top:1251px;">运动模糊</div><svg style="left:2054.5px;top:1259px" width="18" height="8" viewBox="0 0 18 8"><rect x="0" y="0" width="1.5" height="1.5" fill="#8c8c8c"/><rect x="0" y="5" width="1.5" height="1.5" fill="#8c8c8c"/><rect x="5" y="0" width="1.5" height="1.5" fill="#8c8c8c"/><rect x="5" y="5" width="1.5" height="1.5" fill="#8c8c8c"/><rect x="10" y="0" width="1.5" height="1.5" fill="#8c8c8c"/><rect x="10" y="5" width="1.5" height="1.5" fill="#8c8c8c"/><rect x="15" y="0" width="1.5" height="1.5" fill="#8c8c8c"/><rect x="15" y="5" width="1.5" height="1.5" fill="#8c8c8c"/></svg><div class="a" style="left:1724px;top:1283px;width:360px;height:35px;background:#3d3d3d;border-radius:6px;box-sizing:border-box;border:1px solid #484848"></div><svg style="left:1740.0px;top:1293.0px" width="7.0" height="14" viewBox="0 0 7.0 14"><path d="M0.7 0.8L6.3 7.0L0.7 13.2" fill="none" stroke="#d0d0d0" stroke-width="1.5" stroke-linecap="round" stroke-linejoin="round"/></svg><div class="t w" style="left:1755.5px;top:1289px;">可见性</div><svg style="left:2054.5px;top:1297px" width="18" height="8" viewBox="0 0 18 8"><rect x="0" y="0" width="1.5" height="1.5" fill="#8c8c8c"/><rect x="0" y="5" width="1.5" height="1.5" fill="#8c8c8c"/><rect x="5" y="0" width="1.5" height="1.5" fill="#8c8c8c"/><rect x="5" y="5" width="1.5" height="1.5" fill="#8c8c8c"/><rect x="10" y="0" width="1.5" height="1.5" fill="#8c8c8c"/><rect x="10" y="5" width="1.5" height="1.5" fill="#8c8c8c"/><rect x="15" y="0" width="1.5" height="1.5" fill="#8c8c8c"/><rect x="15" y="5" width="1.5" height="1.5" fill="#8c8c8c"/></svg></div></div>
<div class="t d" style="right:27px;top:1311px;color:#989898">5.0.0</div>
<div class="a" style="left:1px;top:1071px;width:1663px;height:232px;border-radius:7px;overflow:hidden"><div class="a" style="left:-1px;top:-1071px;width:2108px;height:1332px"><div class="a" style="left:1px;top:1143px;width:1663px;height:162px;background:#222222;"></div><div class="a" style="left:343.393px;top:1143px;width:1108.547px;height:162px;background:#303030;"></div><svg style="left:0;top:0" width="1670" height="1332"><path d="M39.5 1143V1303M114.5 1143V1303M188.5 1143V1303M262.5 1143V1303M337.5 1143V1303M411.5 1143V1303M485.5 1143V1303M560.5 1143V1303M634.5 1143V1303M708.5 1143V1303M783.5 1143V1303M857.5 1143V1303M931.5 1143V1303M1006.5 1143V1303M1080.5 1143V1303M1154.5 1143V1303M1228.5 1143V1303M1303.5 1143V1303M1377.5 1143V1303M1451.5 1143V1303M1526.5 1143V1303M1600.5 1143V1303" stroke="#161616" stroke-width="1" fill="none"/><path d="M2.5 1143V1303M77.5 1143V1303M151.5 1143V1303M225.5 1143V1303M300.5 1143V1303M374.5 1143V1303M448.5 1143V1303M522.5 1143V1303M597.5 1143V1303M671.5 1143V1303M745.5 1143V1303M820.5 1143V1303M894.5 1143V1303M968.5 1143V1303M1043.5 1143V1303M1117.5 1143V1303M1191.5 1143V1303M1266.5 1143V1303M1340.5 1143V1303M1414.5 1143V1303M1489.5 1143V1303M1563.5 1143V1303M1637.5 1143V1303" stroke="#161616" stroke-opacity=".55" stroke-width="1" fill="none"/><path d="M343.5 1143V1303M1451.5 1143V1303" stroke="#111" stroke-width="1.2"/></svg><div class="a" style="left:10px;top:1296px;width:1642px;height:5px;background:rgba(90,90,90,.35);border-radius:3px"></div><div class="a" style="left:11px;top:1296.5px;width:4px;height:4px;border-radius:50%;background:#1c1c1c"></div><div class="a" style="left:1646px;top:1296.5px;width:4px;height:4px;border-radius:50%;background:#1c1c1c"></div><div class="a" style="left:1px;top:1109px;width:1663px;height:34px;background:#1c1c1c;"></div><div class="t d" style="left:10.135999999999981px;width:60px;text-align:center;top:1116px;color:#a0a0a0"><span style="letter-spacing:3.2px">-</span>48</div><div class="t d" style="left:84.45200000000001px;width:60px;text-align:center;top:1116px;color:#a0a0a0"><span style="letter-spacing:3.2px">-</span>36</div><div class="t d" style="left:158.76799999999997px;width:60px;text-align:center;top:1116px;color:#a0a0a0"><span style="letter-spacing:3.2px">-</span>24</div><div class="t d" style="left:233.084px;width:60px;text-align:center;top:1116px;color:#a0a0a0"><span style="letter-spacing:3.2px">-</span>12</div><div class="t d" style="left:307.4px;width:60px;text-align:center;top:1116px;color:#a0a0a0">0</div><div class="t d" style="left:381.71599999999995px;width:60px;text-align:center;top:1116px;color:#a0a0a0">12</div><div class="t d" style="left:456.032px;width:60px;text-align:center;top:1116px;color:#a0a0a0">24</div><div class="t d" style="left:530.348px;width:60px;text-align:center;top:1116px;color:#a0a0a0">36</div><div class="t d" style="left:604.664px;width:60px;text-align:center;top:1116px;color:#a0a0a0">48</div><div class="t d" style="left:678.98px;width:60px;text-align:center;top:1116px;color:#a0a0a0">60</div><div class="t d" style="left:753.296px;width:60px;text-align:center;top:1116px;color:#a0a0a0">72</div><div class="t d" style="left:827.6120000000001px;width:60px;text-align:center;top:1116px;color:#a0a0a0">84</div><div class="t d" style="left:901.9280000000001px;width:60px;text-align:center;top:1116px;color:#a0a0a0">96</div><div class="t d" style="left:976.2439999999999px;width:60px;text-align:center;top:1116px;color:#a0a0a0">108</div><div class="t d" style="left:1050.56px;width:60px;text-align:center;top:1116px;color:#a0a0a0">120</div><div class="t d" style="left:1124.876px;width:60px;text-align:center;top:1116px;color:#a0a0a0">132</div><div class="t d" style="left:1199.192px;width:60px;text-align:center;top:1116px;color:#a0a0a0">144</div><div class="t d" style="left:1273.508px;width:60px;text-align:center;top:1116px;color:#a0a0a0">156</div><div class="t d" style="left:1347.824px;width:60px;text-align:center;top:1116px;color:#a0a0a0">168</div><div class="t d" style="left:1422.14px;width:60px;text-align:center;top:1116px;color:#a0a0a0">180</div><div class="t d" style="left:1496.4560000000001px;width:60px;text-align:center;top:1116px;color:#a0a0a0">192</div><div class="t d" style="left:1570.772px;width:60px;text-align:center;top:1116px;color:#a0a0a0">204</div><div class="a" style="left:589px;top:1140px;width:2.4px;height:163px;background:#4772b3;"></div><svg style="left:573px;top:1111px" width="36" height="40" viewBox="0 0 36 40"><path d="M5 0.5H30A4 4 0 0 1 34 4.5V27L17.2 38L1 27V4.5A4 4 0 0 1 5 0.5Z" fill="#4772b3"/></svg><div class="t d" style="left:570.5px;width:40px;text-align:center;top:1116px;color:#fff">41</div><div class="a" style="left:0px;top:1139px;width:10px;height:24px;background:#262626;border-radius:0 4px 4px 0"></div><svg style="left:1.75px;top:1146.5px" width="4.5" height="9" viewBox="0 0 4.5 9"><path d="M0.7 0.8L3.8 4.5L0.7 8.2" fill="none" stroke="#8a8a8a" stroke-width="1.2" stroke-linecap="round" stroke-linejoin="round"/></svg><div class="a" style="left:1px;top:1071px;width:1663px;height:38px;background:#303030;"></div><div class="btn " style="left:9px;top:1076.5px;width:46px;height:28px;"></div><svg style="left:15.245000000000001px;top:1078.245px;" width="24.509999999999998" height="24.509999999999998" viewBox="0 0 20 20"><circle cx="10" cy="10" r="8.6" fill="#e8e8e8"/><path d="M11.6 5.6L7.2 10L11.6 14.4" fill="none" stroke="#262626" stroke-width="2.2" stroke-linejoin="miter"/></svg><svg style="left:40.0px;top:1090.5px" width="10" height="5.0" viewBox="0 0 10 5.0"><path d="M0.8 0.6L5.0 4.4L9.2 0.6" fill="none" stroke="#e0e0e0" stroke-width="1.5" stroke-linecap="round" stroke-linejoin="round"/></svg><div class="t " style="left:73px;top:1079px;">视图</div><div class="t " style="left:129px;top:1079px;">标记</div><div class="btn " style="left:182px;top:1076.5px;width:70px;height:28px;"></div><div class="t w" style="left:193px;top:1079px;">回放</div><svg style="left:237.0px;top:1090.5px" width="10" height="5.0" viewBox="0 0 10 5.0"><path d="M0.8 0.6L5.0 4.4L9.2 0.6" fill="none" stroke="#e0e0e0" stroke-width="1.5" stroke-linecap="round" stroke-linejoin="round"/></svg><div class="btn " style="left:615px;top:1076.5px;width:58px;height:28px;background:rgba(40,40,40,.5);border-color:#3a3a3a"></div><div class="a" style="left:616px;top:1078px;width:28px;height:26px;background:#545454;border-radius:4px 0 0 4px"></div><svg style="left:619.17px;top:1080.17px;" width="21.659999999999997" height="21.659999999999997" viewBox="0 0 20 20"><circle cx="10" cy="10" r="6.6" fill="none" stroke="#d8d8d8" stroke-width="1.3"/></svg><svg style="left:653.5px;top:1090.25px" width="9" height="4.5" viewBox="0 0 9 4.5"><path d="M0.8 0.6L4.5 3.9L8.2 0.6" fill="none" stroke="#5e5e5e" stroke-width="1.5" stroke-linecap="round" stroke-linejoin="round"/></svg><div class="btn lt" style="left:681px;top:1076.5px;width:173px;height:28px;"></div><svg style="left:686.18px;top:1081.88px;" width="18.24" height="18.24" viewBox="0 0 20 20"><path d="M4 3.4V16.6" stroke="#e6e6e6" stroke-width="2.2"/><path d="M16.4 3.4V16.6L6.4 10Z" fill="#e6e6e6"/></svg><svg style="left:713.74px;top:1080.74px;" width="20.52" height="20.52" viewBox="0 0 20 20"><path d="M6.6 4L12.6 10L6.6 16L0.6 10Z" fill="#e6e6e6"/><path d="M19 4.6V15.4L12.4 10Z" fill="#e6e6e6"/></svg><div class="a" style="left:709.7px;top:1078px;width:1px;height:26px;background:#444;"></div><svg style="left:743.5799999999999px;top:1081.88px;" width="18.24" height="18.24" viewBox="0 0 20 20"><path d="M16 2.6V17.4L3.4 10Z" fill="#e6e6e6"/></svg><div class="a" style="left:738.4px;top:1078px;width:1px;height:26px;background:#444;"></div><svg style="left:772.28px;top:1081.88px;" width="18.24" height="18.24" viewBox="0 0 20 20"><path d="M4.6 2V18L17.4 10Z" fill="#e6e6e6"/></svg><div class="a" style="left:767.1px;top:1078px;width:1px;height:26px;background:#444;"></div><svg style="left:799.8399999999999px;top:1080.74px;" width="20.52" height="20.52" viewBox="0 0 20 20"><path d="M13.4 4L19.4 10L13.4 16L7.4 10Z" fill="#e6e6e6"/><path d="M1 4.6V15.4L7.6 10Z" fill="#e6e6e6"/></svg><div class="a" style="left:795.8px;top:1078px;width:1px;height:26px;background:#444;"></div><svg style="left:829.68px;top:1081.88px;" width="18.24" height="18.24" viewBox="0 0 20 20"><path d="M16 3.4V16.6" stroke="#e6e6e6" stroke-width="2.2"/><path d="M3.6 3.4V16.6L13.6 10Z" fill="#e6e6e6"/></svg><div class="a" style="left:824.5px;top:1078px;width:1px;height:26px;background:#444;"></div><div class="btn " style="left:862px;top:1076.5px;width:86px;height:28px;"></div><div class="a" style="left:862px;top:1076.5px;width:57px;height:28px;background:#545454;border-radius:5px 0 0 5px"></div><div class="a" style="left:890px;top:1078px;width:1px;height:26px;background:#444;"></div><svg style="left:866.88px;top:1081.88px;" width="18.24" height="18.24" viewBox="0 0 20 20"><path d="M11 4V16L2.4 10Z" fill="#e6e6e6"/><path d="M15 4V16" stroke="#e6e6e6" stroke-width="2.2"/></svg><svg style="left:895.38px;top:1081.88px;" width="18.24" height="18.24" viewBox="0 0 20 20"><path d="M9 4V16L17.6 10Z" fill="#e6e6e6"/><path d="M5 4V16" stroke="#e6e6e6" stroke-width="2.2"/></svg><svg style="left:928.0px;top:1090.5px" width="10" height="5.0" viewBox="0 0 10 5.0"><path d="M0.8 0.6L5.0 4.4L9.2 0.6" fill="none" stroke="#e0e0e0" stroke-width="1.5" stroke-linecap="round" stroke-linejoin="round"/></svg><div class="btn " style="left:955px;top:1076.5px;width:58px;height:28px;"></div><div class="a" style="left:955px;top:1076.5px;width:29px;height:28px;background:#545454;border-radius:5px 0 0 5px"></div><svg style="left:957.53px;top:1078.03px;" width="23.939999999999998" height="23.939999999999998" viewBox="0 0 20 20"><path d="M3.6 14.4V8.6A6.4 6.4 0 0 1 16.4 8.6V14.4M6.8 14.4V8.8A3.2 3.2 0 0 1 13.2 8.8V14.4" fill="none" stroke="#bdbdbd" stroke-width="1.3"/><path d="M2 14.8H8M12 14.8H18M1.6 18.4H18.4" stroke="#bdbdbd" stroke-width="1.3"/></svg><svg style="left:993.0px;top:1090.5px" width="10" height="5.0" viewBox="0 0 10 5.0"><path d="M0.8 0.6L5.0 4.4L9.2 0.6" fill="none" stroke="#e0e0e0" stroke-width="1.5" stroke-linecap="round" stroke-linejoin="round"/></svg><div class="a" style="left:1172px;top:1076.5px;width:107px;height:28px;background:#545454;border-radius:5px"></div><div class="t w d" style="left:1175.0px;width:100px;text-align:center;top:1079px;">41</div><div class="a" style="left:1287px;top:1076.5px;width:283px;height:28px;background:#545454;border-radius:5px"></div><div class="a" style="left:1314.5px;top:1078px;width:1px;height:26px;background:#444;"></div><div class="a" style="left:1442px;top:1078px;width:1px;height:26px;background:#444;"></div><svg style="left:1289.1px;top:1079.6px;" width="22.799999999999997" height="22.799999999999997" viewBox="0 0 20 20"><circle cx="10" cy="11.2" r="7" fill="none" stroke="#dcdcdc" stroke-width="1.5" stroke-linecap="round" stroke-linejoin="round"/><path d="M10 7V11.4H13.4M7.6 1.8H12.4M10 2V4M15.6 5.4L17 4" fill="none" stroke="#dcdcdc" stroke-width="1.5" stroke-linecap="round" stroke-linejoin="round"/></svg><div class="t w" style="left:1338px;top:1079px;">起始</div><div class="t w d" style="left:1401.0px;width:30px;text-align:center;top:1079px;">1</div><div class="t w" style="left:1466px;top:1079px;">结束</div><div class="t w d" style="left:1503.5px;width:60px;text-align:center;top:1079px;">180</div><div class="btn " style="left:1595px;top:1076.5px;width:57px;height:28px;"></div><div class="a" style="left:1595px;top:1076.5px;width:28px;height:28px;background:#4772b3;border-radius:5px 0 0 5px"></div><svg style="left:1596.53px;top:1079.03px;" width="23.939999999999998" height="23.939999999999998" viewBox="0 0 20 20"><circle cx="12.6" cy="7.4" r="6" fill="#ffffff"/><circle cx="7.4" cy="12.6" r="5.6" fill="none" stroke="#ffffff" stroke-width="1.5"/><path d="M9.6 7.4A5.6 5.6 0 0 1 12.6 10.6" fill="none" stroke="#4772b3" stroke-width="1.5"/></svg><svg style="left:1632.0px;top:1090.5px" width="10" height="5.0" viewBox="0 0 10 5.0"><path d="M0.8 0.6L5.0 4.4L9.2 0.6" fill="none" stroke="#e0e0e0" stroke-width="1.5" stroke-linecap="round" stroke-linejoin="round"/></svg></div></div>
<svg style="left:2px;top:1311px" width="20" height="22" viewBox="0 0 20 22"><path d="M2 22V5A4 4 0 0 1 6 1H13A4 4 0 0 1 17 5V22" fill="none" stroke="#bdbdbd" stroke-width="1.5"/><path d="M2.6 11V5A3.4 3.4 0 0 1 6 1.6H9V11Z" fill="#bdbdbd"/></svg>
<div class="t " style="left:22px;top:1310px;color:#a8a8a8">选择（列表）</div>
<svg style="left:139px;top:1311px" width="20" height="22" viewBox="0 0 20 22"><path d="M2 22V5A4 4 0 0 1 6 1H13A4 4 0 0 1 17 5V22" fill="none" stroke="#bdbdbd" stroke-width="1.5"/><rect x="7" y="2.6" width="5" height="9" rx="1.6" fill="#bdbdbd"/></svg>
<div class="t " style="left:158px;top:1310px;color:#a8a8a8">视图中心对齐鼠标</div>
<div class="a" style="left:1670px;top:107px;width:427px;height:387px;box-sizing:border-box;border:1px solid rgba(255,255,255,0.055);border-radius:8px;pointer-events:none"></div>
<div class="a" style="left:1670px;top:500px;width:427px;height:803px;box-sizing:border-box;border:1px solid rgba(255,255,255,0.055);border-radius:8px;pointer-events:none"></div>
<div class="a" style="left:1px;top:1071px;width:1663px;height:232px;box-sizing:border-box;border:1px solid rgba(255,255,255,0.05);border-radius:7px;pointer-events:none"></div>
<div class="a" style="left:1px;top:107px;width:1663px;height:958px;box-sizing:border-box;border:1px solid rgba(255,255,255,0.09);border-radius:7px 7px 7px 3px;pointer-events:none"></div>
</div></body></html>
